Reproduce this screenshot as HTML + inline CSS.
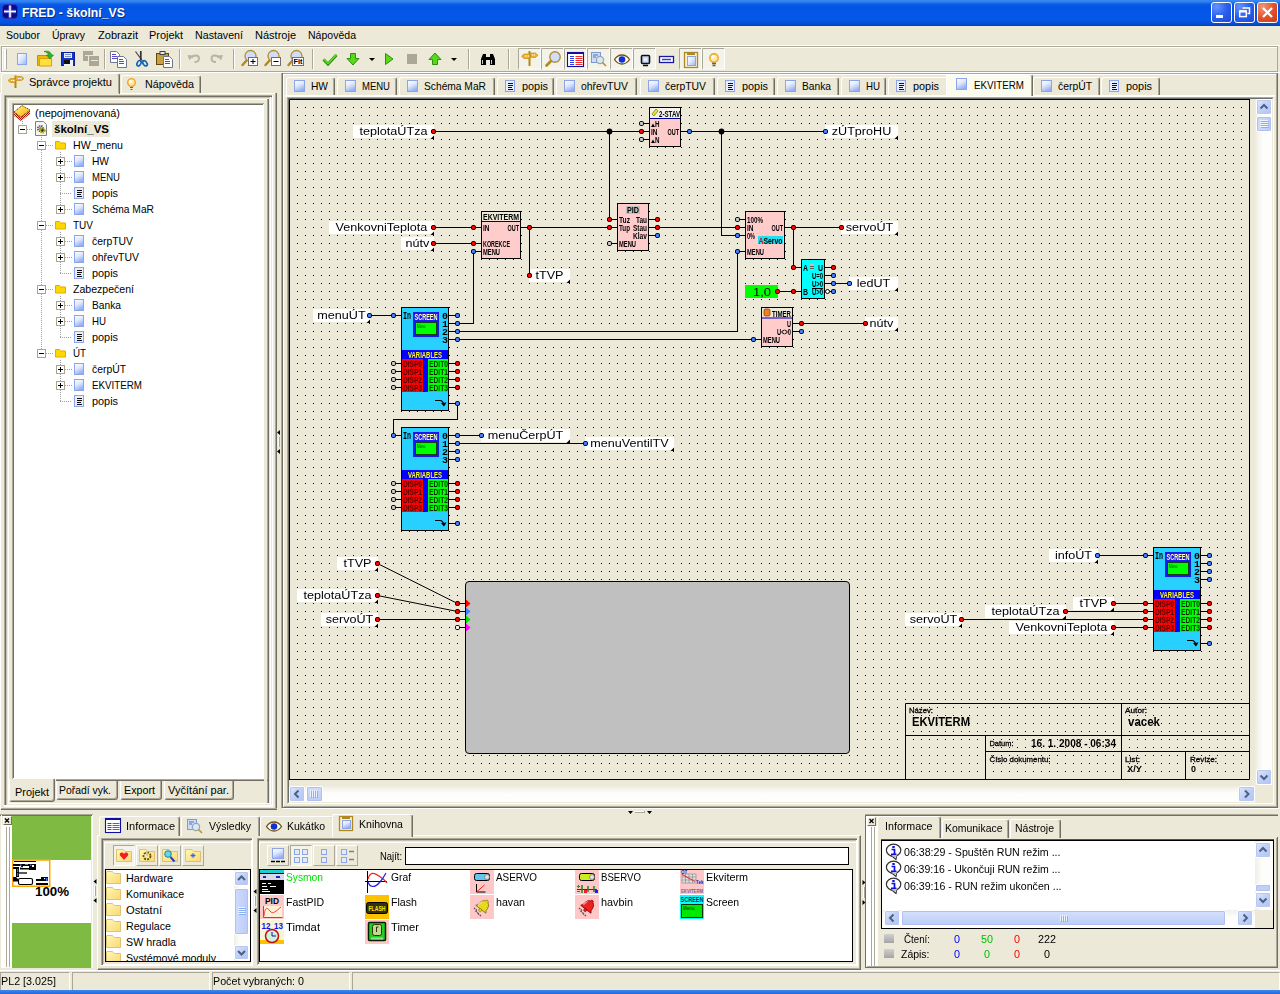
<!DOCTYPE html><html><head><meta charset="utf-8"><title>FRED</title><style>
*{box-sizing:border-box;margin:0;padding:0}
html,body{width:1280px;height:994px;overflow:hidden;background:#ECE9D8}
body{position:relative;font-family:"Liberation Sans",sans-serif;font-size:11px;color:#000}
.a{position:absolute}
.t{position:absolute;white-space:nowrap;line-height:13px}
.b{font-weight:bold}
svg{position:absolute;left:0;top:0;overflow:visible}
</style></head><body>
<div class="a" style="left:0px;top:0px;width:1280px;height:26px;background:linear-gradient(#3A8BF4 0%,#2F7CEE 8%,#0B5CE6 16%,#0355E5 28%,#0458E8 75%,#0350D8 90%,#0140B8 100%)"></div>
<svg width="1280" height="30"><rect x="2.5" y="4.5" width="15" height="14" rx="3.5" fill="#0A0A8C" stroke="#3030B0"/><path d="M10 5.500v12M4 11.500h12" stroke="#7070E0" stroke-width="3.400" opacity=".7"/><path d="M10 5.500v12M4 11.500h12" stroke="#fff" stroke-width="1.500"/></svg>
<div class="t" style="left:22px;top:5px;font-size:13px;font-weight:bold;transform:scaleX(0.944);transform-origin:0 0;color:#fff;line-height:16px;text-shadow:1px 1px 0 #0A2A80">FRED - školní_VS</div>
<div class="a" style="left:1211px;top:2px;width:21px;height:21px;background:radial-gradient(circle at 25% 20%,#6494FF,#2A5EEC 50%,#1E4AD4);border:1px solid #fff;border-radius:3px"></div>
<div class="a" style="left:1234px;top:2px;width:21px;height:21px;background:radial-gradient(circle at 25% 20%,#6494FF,#2A5EEC 50%,#1E4AD4);border:1px solid #fff;border-radius:3px"></div>
<div class="a" style="left:1257px;top:2px;width:21px;height:21px;background:radial-gradient(circle at 25% 20%,#F09878,#E25028 55%,#C83C14);border:1px solid #fff;border-radius:3px"></div>
<svg width="1280" height="30"><rect x="1216" y="15" width="7" height="3" fill="#fff"/><path d="M1242.5 8h7v5.500h-2" fill="none" stroke="#fff" stroke-width="1.5"/><rect x="1239.7" y="11" width="6.6" height="5.600" fill="none" stroke="#fff" stroke-width="1.5"/><path d="M1239.700 11.500h6.600" stroke="#fff" stroke-width="2"/><path d="M1263 8l9 9M1272 8l-9 9" stroke="#fff" stroke-width="2.2"/></svg>
<div class="t" style="left:6px;top:29px;font-size:11px;transform:scaleX(0.958);transform-origin:0 0;">Soubor</div>
<div class="t" style="left:52px;top:29px;font-size:11px;transform:scaleX(0.947);transform-origin:0 0;">Úpravy</div>
<div class="t" style="left:98px;top:29px;font-size:11px;transform:scaleX(1.007);transform-origin:0 0;">Zobrazit</div>
<div class="t" style="left:149px;top:29px;font-size:11px;transform:scaleX(0.993);transform-origin:0 0;">Projekt</div>
<div class="t" style="left:195px;top:29px;font-size:11px;transform:scaleX(0.969);transform-origin:0 0;">Nastavení</div>
<div class="t" style="left:255px;top:29px;font-size:11px;transform:scaleX(1.001);transform-origin:0 0;">Nástroje</div>
<div class="t" style="left:308px;top:29px;font-size:11px;transform:scaleX(0.957);transform-origin:0 0;">Nápověda</div>
<div class="a" style="left:0px;top:45px;width:1280px;height:1px;background:#fff"></div>
<div class="a" style="left:1px;top:46px;width:1277px;height:26px;border:1px solid #ACA899;border-right-color:#ACA899"></div>
<div class="a" style="left:2px;top:47px;width:1275px;height:1px;background:#fff"></div>
<div class="a" style="left:2px;top:47px;width:1px;height:24px;background:#fff"></div>
<div class="a" style="left:0px;top:72px;width:1280px;height:1px;background:#fff"></div>
<div class="a" style="left:4px;top:49px;width:1px;height:20px;background:#fff"></div>
<div class="a" style="left:5px;top:49px;width:1px;height:20px;background:#fff"></div>
<div class="a" style="left:6px;top:49px;width:1px;height:20px;background:#ACA899"></div>
<svg width="1280" height="80"><linearGradient id="pg17_53" x1="0" y1="0" x2="1" y2="1"><stop offset="0" stop-color="#fff"/><stop offset="0.5" stop-color="#DCE6FC"/><stop offset="1" stop-color="#9AB4F0"/></linearGradient><rect x="17.5" y="53.5" width="9" height="11" fill="url(#pg17_53)" stroke="#8CA4EC"/><path d="M37.5 55.5h10l2 2v8h-12z" fill="#F0B800" stroke="#C89000"/><path d="M39.5 58.500h12v7.5h-12z" fill="#FFE040" stroke="#D8A000"/><path d="M44 51.500c4-1 7 0 7.500 3.500h2l-3.500 4-3.500-4h2c-.5-2-2-3-4.500-3.500z" fill="#30B030" stroke="#108010" stroke-width=".6"/><rect x="61.500" y="52.500" width="13" height="13" fill="#1038D0" stroke="#0820A0"/><rect x="64" y="53" width="8" height="5" fill="#E8ECF8"/><path d="M65 54.500h6M65 56.500h6" stroke="#8090C0"/><rect x="64" y="60" width="9" height="6" fill="#F0F0F0"/><rect x="64" y="60" width="6" height="4" fill="#101010"/><rect x="83" y="51" width="10" height="10" fill="#ACA899"/><rect x="88.500" y="55.500" width="11" height="11" fill="#ACA899" stroke="#ECE9D8" stroke-width="1"/><path d="M85 55.500h4M91 60.500h7" stroke="#ECE9D8"/><path d="M104.5 49v20" stroke="#ACA899"/><path d="M105.5 49v20" stroke="#fff"/><path d="M110.5 51.5h6l3 3v8h-9z" fill="#fff" stroke="#707890"/><path d="M112 54.5h4M112 56.5h5M112 58.5h5" stroke="#5848C8"/><path d="M117.5 56.5h6l3 3v8h-9z" fill="#fff" stroke="#707890"/><path d="M119 59.5h4M119 61.5h5M119 63.5h5" stroke="#5848C8"/><path d="M135.500 51.500l7 9.500" stroke="#404040" stroke-width="1.200"/><path d="M140.800 51v9" stroke="#303030" stroke-width="1.700"/><ellipse cx="139" cy="63.300" rx="1.800" ry="2.900" transform="rotate(28 139 63.300)" fill="none" stroke="#1060C0" stroke-width="1.600"/><ellipse cx="145" cy="63.300" rx="1.800" ry="2.900" transform="rotate(-38 145 63.300)" fill="none" stroke="#1060C0" stroke-width="1.600"/><rect x="156.500" y="53.500" width="12" height="11" fill="#C8A040" stroke="#604810"/><rect x="160" y="51.500" width="5" height="3" fill="#E8E8E8" stroke="#404040"/><path d="M163.5 56.5h6l3 3v8h-9z" fill="#fff" stroke="#707890"/><path d="M165 59.5h4M165 61.5h5M165 63.5h5" stroke="#5848C8"/><path d="M179.5 49v20" stroke="#ACA899"/><path d="M180.5 49v20" stroke="#fff"/><path d="M191.500 58C193 54.500 199 54.500 199 58.500C199 61 197 62 194.500 62" fill="none" stroke="#B8B4A4" stroke-width="1.900"/><path d="M187.500 55l5.500 .5-3.500 5z" fill="#B8B4A4"/><path d="M219 58C217.500 54.500 211.500 54.500 211.500 58.500C211.500 61 213.500 62 216 62" fill="none" stroke="#B8B4A4" stroke-width="1.900"/><path d="M223 55l-5.500 .5 3.500 5z" fill="#B8B4A4"/><path d="M233.5 49v20" stroke="#ACA899"/><path d="M234.5 49v20" stroke="#fff"/><path d="M242.5 65l4.500-5" stroke="#B08820" stroke-width="2.400" stroke-linecap="round"/><circle cx="250.5" cy="56" r="5.500" fill="#D0DCFA" stroke="#B09030" stroke-width="1.300"/><rect x="248.5" y="57.5" width="9" height="8" fill="#fff" stroke="#707070"/><path d="M250.5 61.500h5M253 59v5" stroke="#000"/><path d="M265.5 65l4.500-5" stroke="#B08820" stroke-width="2.400" stroke-linecap="round"/><circle cx="273.5" cy="56" r="5.500" fill="#D0DCFA" stroke="#B09030" stroke-width="1.300"/><rect x="271.5" y="57.5" width="9" height="8" fill="#fff" stroke="#707070"/><path d="M273.5 61.500h5" stroke="#000"/><path d="M288.500 65l4.500-5" stroke="#B08820" stroke-width="2.400" stroke-linecap="round"/><circle cx="296.500" cy="56" r="5.500" fill="#D0DCFA" stroke="#B09030" stroke-width="1.300"/><rect x="292.500" y="57.500" width="11" height="8" fill="#fff" stroke="#707070"/><text x="293.500" y="64.300" font-size="7" font-weight="bold" font-family="Liberation Sans" textLength="9" lengthAdjust="spacingAndGlyphs">Fit</text><path d="M312.5 49v20" stroke="#ACA899"/><path d="M313.5 49v20" stroke="#fff"/><path d="M323.500 59.500l4.500 4.500 8.500-9" fill="none" stroke="#2C9010" stroke-width="3"/><path d="M323.500 59l4.500 4.500 8.500-9" fill="none" stroke="#60E020" stroke-width="1.400"/><path d="M350.500 53.500h5v5h3.500l-6 6.500-6-6.500h3.500z" fill="#58D818" stroke="#2C9010"/><path d="M369 58h6l-3 3z" fill="#000"/><path d="M385.500 53.500l7.500 5.500-7.500 5.500z" fill="#58D818" stroke="#2C9010"/><rect x="407" y="54" width="10" height="10" fill="#ACA899"/><path d="M432.500 64.500h5v-5h3.500l-6-6.500-6 6.500h3.500z" fill="#58D818" stroke="#2C9010"/><path d="M451 58h6l-3 3z" fill="#000"/><path d="M468.5 49v20" stroke="#ACA899"/><path d="M469.5 49v20" stroke="#fff"/><path d="M481 65v-6l2-5h3v3h4v-3h3l2 5v6h-5v-5h-4v5z" fill="#000"/><path d="M482.500 60v4M491.500 60v4" stroke="#fff" stroke-width=".8"/><path d="M508.5 49v20" stroke="#ACA899"/><path d="M509.5 49v20" stroke="#fff"/><rect x="518" y="48" width="23" height="21" fill="#F4F3EA"/><path d="M518.5 69.500v-21h22" fill="none" stroke="#ACA899"/><path d="M540.5 48.500v20.500h-22" fill="none" stroke="#fff"/><rect x="541" y="48" width="23" height="21" fill="#F4F3EA"/><path d="M541.5 69.500v-21h22" fill="none" stroke="#ACA899"/><path d="M563.5 48.500v20.500h-22" fill="none" stroke="#fff"/><rect x="564" y="48" width="23" height="21" fill="#F4F3EA"/><path d="M564.5 69.500v-21h22" fill="none" stroke="#ACA899"/><path d="M586.5 48.500v20.500h-22" fill="none" stroke="#fff"/><rect x="587" y="48" width="23" height="21" fill="#F4F3EA"/><path d="M587.5 69.500v-21h22" fill="none" stroke="#ACA899"/><path d="M609.5 48.500v20.500h-22" fill="none" stroke="#fff"/><rect x="610" y="48" width="23" height="21" fill="#F4F3EA"/><path d="M610.5 69.500v-21h22" fill="none" stroke="#ACA899"/><path d="M632.5 48.500v20.500h-22" fill="none" stroke="#fff"/><rect x="633" y="48" width="23" height="21" fill="#F4F3EA"/><path d="M633.5 69.500v-21h22" fill="none" stroke="#ACA899"/><path d="M655.5 48.500v20.500h-22" fill="none" stroke="#fff"/><rect x="679" y="48" width="23" height="21" fill="#F4F3EA"/><path d="M679.5 69.500v-21h22" fill="none" stroke="#ACA899"/><path d="M701.5 48.500v20.500h-22" fill="none" stroke="#fff"/><rect x="702" y="48" width="23" height="21" fill="#F4F3EA"/><path d="M702.5 69.500v-21h22" fill="none" stroke="#ACA899"/><path d="M724.5 48.500v20.500h-22" fill="none" stroke="#fff"/><path d="M529.500 51v15" stroke="#B8860B" stroke-width="2"/><path d="M524 54h6v4.500h-6l-2.500-2.200z" fill="#F0B020" stroke="#B8860B" stroke-width=".6"/><path d="M530.500 53h5l2.500 2.200-2.500 2.200h-5z" fill="#F0B020" stroke="#B8860B" stroke-width=".6"/><path d="M525 56h1.500M527.500 56h1.500M532 55h1.500M534 55h1" stroke="#fff"/><path d="M546.500 65.500l5-5" stroke="#B08820" stroke-width="2.600" stroke-linecap="round"/><circle cx="555" cy="57" r="5.200" fill="#D0DEFC" stroke="#B09030" stroke-width="1.400"/><rect x="567.500" y="52.500" width="16" height="14" fill="#fff" stroke="#1010A0" stroke-width="1.100"/><rect x="567.500" y="52" width="16" height="2" fill="#1010A0"/><path d="M570 56.500h4M570 58.500h4M570 60.500h4M570 62.500h4M570 64.500h4" stroke="#3040E0"/><path d="M575.500 56.500h7M575.500 58.500h7M575.500 60.500h7M575.500 62.500h7M575.500 64.500h7" stroke="#F03030"/><rect x="591.500" y="52.500" width="9" height="10" fill="#D0DCF4" stroke="#8098D0"/><path d="M593 55h5M593 57h3" stroke="#5070C0"/><circle cx="600" cy="60" r="3.600" fill="#D8E8F8" stroke="#90A8B0" stroke-width="1.200"/><path d="M602.500 62.500l3.500 3.500" stroke="#C09020" stroke-width="1.600"/><path d="M614.500 59.500c4-6 11-6 15 0c-4 6-11 6-15 0z" fill="#fff" stroke="#705010" stroke-width="1.300"/><circle cx="622" cy="59.500" r="3.300" fill="#1030D0"/><rect x="641.500" y="55.500" width="8" height="8" rx="1" fill="#C8D8F8" stroke="#101010" stroke-width="1.600"/><path d="M643 65.500h5" stroke="#101010" stroke-width="1.500"/><rect x="644" y="58" width="3" height="3" fill="#E8F0FF"/><rect x="659.500" y="56.500" width="14" height="6" fill="#fff" stroke="#1818A0" stroke-width="1.300"/><path d="M662 59.500h9" stroke="#3040D0" stroke-width="1.500"/><rect x="684.500" y="52.500" width="13" height="15" fill="#F8F0D8" stroke="#B08820" stroke-width="1.300"/><rect x="687" y="53" width="8" height="2" fill="#B08820"/><linearGradient id="pg687_56" x1="0" y1="0" x2="1" y2="1"><stop offset="0" stop-color="#fff"/><stop offset="0.5" stop-color="#DCE6FC"/><stop offset="1" stop-color="#9AB4F0"/></linearGradient><rect x="687.5" y="56.5" width="8" height="9" fill="url(#pg687_56)" stroke="#8CA4EC"/><circle cx="714" cy="58" r="4.200" fill="#FFE8A0" stroke="#F0A020" stroke-width="1.400"/><circle cx="713" cy="57" r="1.800" fill="#fff"/><path d="M712 63.500h4M712.500 65.500h3" stroke="#806020" stroke-width="1.300"/></svg>
<div class="a" style="left:0px;top:93px;width:277px;height:1px;background:#fff"></div>
<div class="a" style="left:0px;top:93px;width:1px;height:716px;background:#fff"></div>
<div class="a" style="left:121px;top:75px;width:80px;height:18px;background:#ECE9D8;border-left:1px solid #fff;border-top:1px solid #fff;border-right:1px solid #716F64;border-radius:3px 3px 0 0;box-shadow:inset -1px 0 0 #ACA899"></div>
<div class="a" style="left:1px;top:73px;width:119px;height:21px;background:#ECE9D8;border-left:1px solid #fff;border-top:1px solid #fff;border-right:1px solid #716F64;border-radius:3px 3px 0 0;box-shadow:inset -1px 0 0 #ACA899"></div>
<div class="a" style="left:2px;top:93px;width:117px;height:2px;background:#ECE9D8"></div>
<div class="t" style="left:29px;top:76px;font-size:11px;transform:scaleX(1.005);transform-origin:0 0;">Správce projektu</div>
<div class="t" style="left:145px;top:78px;font-size:11px;transform:scaleX(0.977);transform-origin:0 0;">Nápověda</div>
<div class="a" style="left:275px;top:93px;width:1px;height:717px;background:#ACA899"></div>
<div class="a" style="left:276px;top:93px;width:1px;height:717px;background:#716F64"></div>
<div class="a" style="left:1px;top:808px;width:276px;height:1px;background:#ACA899"></div>
<div class="a" style="left:1px;top:809px;width:276px;height:1px;background:#716F64"></div>
<div class="a" style="left:4px;top:95px;width:1px;height:711px;background:#ACA899"></div>
<div class="a" style="left:4px;top:95px;width:268px;height:1px;background:#ACA899"></div>
<div class="a" style="left:5px;top:96px;width:1px;height:710px;background:#716F64"></div>
<div class="a" style="left:5px;top:96px;width:267px;height:1px;background:#716F64"></div>
<div class="a" style="left:6px;top:97px;width:1px;height:709px;background:#C4C0AE"></div>
<div class="a" style="left:6px;top:97px;width:266px;height:1px;background:#C4C0AE"></div>
<div class="a" style="left:270px;top:97px;width:1px;height:708px;background:#fff"></div>
<div class="a" style="left:272px;top:95px;width:1px;height:712px;background:#fff"></div>
<div class="a" style="left:8px;top:803px;width:263px;height:1px;background:#fff"></div>
<div class="a" style="left:4px;top:805px;width:269px;height:1px;background:#fff"></div>
<div class="a" style="left:4px;top:806px;width:269px;height:1px;background:#fff"></div>
<div class="a" style="left:8px;top:99px;width:1px;height:704px;background:#fff"></div>
<div class="a" style="left:8px;top:99px;width:260px;height:1px;background:#fff"></div>
<div class="a" style="left:267px;top:99px;width:1px;height:704px;background:#ACA899"></div>
<div class="a" style="left:268px;top:99px;width:1px;height:704px;background:#716F64"></div>
<div class="a" style="left:12px;top:103px;width:253px;height:677px;background:#fff;border-left:1px solid #ACA899;border-top:1px solid #ACA899"></div>
<div class="a" style="left:13px;top:104px;width:250px;height:674px;background:#fff;border-left:1px solid #716F64;border-top:1px solid #716F64"></div>
<div class="a" style="left:56px;top:779px;width:212px;height:1px;background:#ACA899"></div>
<div class="a" style="left:56px;top:780px;width:212px;height:1px;background:#716F64"></div>
<div class="a" style="left:264px;top:103px;width:3px;height:700px;background:#ECE9D8"></div>
<div class="t" style="left:35px;top:107px;font-size:11px;transform:scaleX(0.993);transform-origin:0 0;">(nepojmenovaná)</div>
<div class="a" style="left:52px;top:121px;width:58px;height:16px;background:#ECE9D8"></div>
<div class="t" style="left:54px;top:123px;font-size:11px;font-weight:bold;transform:scaleX(1.046);transform-origin:0 0;">školní_VS</div>
<div class="t" style="left:73px;top:139px;font-size:11px;transform:scaleX(0.962);transform-origin:0 0;">HW_menu</div>
<div class="t" style="left:92px;top:155px;font-size:11px;transform:scaleX(0.928);transform-origin:0 0;">HW</div>
<div class="t" style="left:92px;top:171px;font-size:11px;transform:scaleX(0.864);transform-origin:0 0;">MENU</div>
<div class="t" style="left:92px;top:187px;font-size:11px;transform:scaleX(0.989);transform-origin:0 0;">popis</div>
<div class="t" style="left:92px;top:203px;font-size:11px;transform:scaleX(0.930);transform-origin:0 0;">Schéma MaR</div>
<div class="t" style="left:73px;top:219px;font-size:11px;transform:scaleX(0.909);transform-origin:0 0;">TUV</div>
<div class="t" style="left:92px;top:235px;font-size:11px;transform:scaleX(0.945);transform-origin:0 0;">čerpTUV</div>
<div class="t" style="left:92px;top:251px;font-size:11px;transform:scaleX(0.949);transform-origin:0 0;">ohřevTUV</div>
<div class="t" style="left:92px;top:267px;font-size:11px;transform:scaleX(0.989);transform-origin:0 0;">popis</div>
<div class="t" style="left:73px;top:283px;font-size:11px;transform:scaleX(0.959);transform-origin:0 0;">Zabezpečení</div>
<div class="t" style="left:92px;top:299px;font-size:11px;transform:scaleX(0.930);transform-origin:0 0;">Banka</div>
<div class="t" style="left:92px;top:315px;font-size:11px;transform:scaleX(0.881);transform-origin:0 0;">HU</div>
<div class="t" style="left:92px;top:331px;font-size:11px;transform:scaleX(0.989);transform-origin:0 0;">popis</div>
<div class="t" style="left:73px;top:347px;font-size:11px;transform:scaleX(0.887);transform-origin:0 0;">ÚT</div>
<div class="t" style="left:92px;top:363px;font-size:11px;transform:scaleX(0.943);transform-origin:0 0;">čerpÚT</div>
<div class="t" style="left:92px;top:379px;font-size:11px;transform:scaleX(0.889);transform-origin:0 0;">EKVITERM</div>
<div class="t" style="left:92px;top:395px;font-size:11px;transform:scaleX(0.989);transform-origin:0 0;">popis</div>
<svg width="290" height="820"><path d="M15.500 75.500v12.500" stroke="#B8860B" stroke-width="2"/><path d="M10.500 78.500h5v4h-5l-2.500-2z" fill="#F0B020" stroke="#B8860B" stroke-width=".6"/><path d="M15.500 76.500h6l2.500 2-2.500 2h-6z" fill="#F0B020" stroke="#B8860B" stroke-width=".6"/><path d="M11 80.500h1.500M13 80.500h1.500M18 78.500h1.500M20 78.500h1.500" stroke="#fff"/><circle cx="131.500" cy="82.500" r="3.800" fill="#FFE8A0" stroke="#F0A020" stroke-width="1.300"/><circle cx="130.500" cy="81.500" r="1.500" fill="#fff"/><path d="M130 87.500h3M130.500 89.500h2" stroke="#806020" stroke-width="1.200"/><path d="M22.500 121v4" stroke="#A0A0A0" stroke-dasharray="1 1"/><path d="M41.500 137v4M41.500 150v71M41.500 230v55M41.500 294v55" stroke="#A0A0A0" stroke-dasharray="1 1"/><path d="M60.500 152v58" stroke="#A0A0A0" stroke-dasharray="1 1"/><path d="M60.500 232v42" stroke="#A0A0A0" stroke-dasharray="1 1"/><path d="M60.500 296v42" stroke="#A0A0A0" stroke-dasharray="1 1"/><path d="M60.500 360v42" stroke="#A0A0A0" stroke-dasharray="1 1"/><defs><pattern id="chk" width="2" height="2" patternUnits="userSpaceOnUse"><rect width="2" height="2" fill="#FFD000"/><rect width="1" height="1" fill="#B01000"/><rect x="1" y="1" width="1" height="1" fill="#B01000"/></pattern><linearGradient id="bk" x1="0" y1="0" x2="1" y2="1"><stop offset="0" stop-color="#FFF080"/><stop offset="1" stop-color="#FFB000"/></linearGradient></defs><path d="M14 112v4l7 5 9-7v-4l-9 7z" fill="url(#chk)"/><path d="M14 112l8-6.500 8 4.500-9 7z" fill="url(#bk)" stroke="#301000" stroke-width=".8" stroke-dasharray="1.200 .8"/><path d="M27 129.5H33" stroke="#A0A0A0" stroke-dasharray="1 1"/><rect x="18.5" y="125.5" width="8" height="8" fill="#fff" stroke="#A8A490"/><path d="M20 129.5h5" stroke="#000"/><path d="M35.500 121.500h8l3 3v11h-11z" fill="#F4F4F4" stroke="#808080"/><circle cx="40.500" cy="128.500" r="2.600" fill="none" stroke="#606060" stroke-width="2" stroke-dasharray="1.300 .8"/><circle cx="40.500" cy="128.500" r="1.600" fill="#909090"/><circle cx="42.500" cy="130.500" r="2.200" fill="none" stroke="#A8A000" stroke-width="1.800" stroke-dasharray="1.200 .7"/><circle cx="42.500" cy="130.500" r="1.200" fill="#303000"/><path d="M46 145.5H53" stroke="#A0A0A0" stroke-dasharray="1 1"/><rect x="37.5" y="141.5" width="8" height="8" fill="#fff" stroke="#A8A490"/><path d="M39 145.5h5" stroke="#000"/><path d="M55.5 141.5h4l1 1.500h5v6h-10z" fill="#FFD800" stroke="#E8A800"/><path d="M65 161.5H72" stroke="#A0A0A0" stroke-dasharray="1 1"/><rect x="56.5" y="157.5" width="8" height="8" fill="#fff" stroke="#A8A490"/><path d="M58 161.5h5" stroke="#000"/><path d="M60.5 159v5" stroke="#000"/><linearGradient id="tp1" x1="0" y1="0" x2="0.450" y2="1"><stop offset="0" stop-color="#fff"/><stop offset="0.5" stop-color="#E0E8FC"/><stop offset="1" stop-color="#94B0F4"/></linearGradient><rect x="74.5" y="155.5" width="9" height="11" fill="url(#tp1)" stroke="#8CA4EC"/><path d="M65 177.5H72" stroke="#A0A0A0" stroke-dasharray="1 1"/><rect x="56.5" y="173.5" width="8" height="8" fill="#fff" stroke="#A8A490"/><path d="M58 177.5h5" stroke="#000"/><path d="M60.5 175v5" stroke="#000"/><linearGradient id="tp2" x1="0" y1="0" x2="0.450" y2="1"><stop offset="0" stop-color="#fff"/><stop offset="0.5" stop-color="#E0E8FC"/><stop offset="1" stop-color="#94B0F4"/></linearGradient><rect x="74.5" y="171.5" width="9" height="11" fill="url(#tp2)" stroke="#8CA4EC"/><path d="M60 193.5H72" stroke="#A0A0A0" stroke-dasharray="1 1"/><rect x="74.5" y="187.5" width="9" height="11" fill="#E8EEFC" stroke="#8CA4EC"/><path d="M77 190.5h5M77 192.5h5M77 194.5h4M77 196.5h5" stroke="#101010" stroke-width="1.200"/><path d="M65 209.5H72" stroke="#A0A0A0" stroke-dasharray="1 1"/><rect x="56.5" y="205.5" width="8" height="8" fill="#fff" stroke="#A8A490"/><path d="M58 209.5h5" stroke="#000"/><path d="M60.5 207v5" stroke="#000"/><linearGradient id="tp3" x1="0" y1="0" x2="0.450" y2="1"><stop offset="0" stop-color="#fff"/><stop offset="0.5" stop-color="#E0E8FC"/><stop offset="1" stop-color="#94B0F4"/></linearGradient><rect x="74.5" y="203.5" width="9" height="11" fill="url(#tp3)" stroke="#8CA4EC"/><path d="M46 225.5H53" stroke="#A0A0A0" stroke-dasharray="1 1"/><rect x="37.5" y="221.5" width="8" height="8" fill="#fff" stroke="#A8A490"/><path d="M39 225.5h5" stroke="#000"/><path d="M55.5 221.5h4l1 1.500h5v6h-10z" fill="#FFD800" stroke="#E8A800"/><path d="M65 241.5H72" stroke="#A0A0A0" stroke-dasharray="1 1"/><rect x="56.5" y="237.5" width="8" height="8" fill="#fff" stroke="#A8A490"/><path d="M58 241.5h5" stroke="#000"/><path d="M60.5 239v5" stroke="#000"/><linearGradient id="tp4" x1="0" y1="0" x2="0.450" y2="1"><stop offset="0" stop-color="#fff"/><stop offset="0.5" stop-color="#E0E8FC"/><stop offset="1" stop-color="#94B0F4"/></linearGradient><rect x="74.5" y="235.5" width="9" height="11" fill="url(#tp4)" stroke="#8CA4EC"/><path d="M65 257.5H72" stroke="#A0A0A0" stroke-dasharray="1 1"/><rect x="56.5" y="253.5" width="8" height="8" fill="#fff" stroke="#A8A490"/><path d="M58 257.5h5" stroke="#000"/><path d="M60.5 255v5" stroke="#000"/><linearGradient id="tp5" x1="0" y1="0" x2="0.450" y2="1"><stop offset="0" stop-color="#fff"/><stop offset="0.5" stop-color="#E0E8FC"/><stop offset="1" stop-color="#94B0F4"/></linearGradient><rect x="74.5" y="251.5" width="9" height="11" fill="url(#tp5)" stroke="#8CA4EC"/><path d="M60 273.5H72" stroke="#A0A0A0" stroke-dasharray="1 1"/><rect x="74.5" y="267.5" width="9" height="11" fill="#E8EEFC" stroke="#8CA4EC"/><path d="M77 270.5h5M77 272.5h5M77 274.5h4M77 276.5h5" stroke="#101010" stroke-width="1.200"/><path d="M46 289.5H53" stroke="#A0A0A0" stroke-dasharray="1 1"/><rect x="37.5" y="285.5" width="8" height="8" fill="#fff" stroke="#A8A490"/><path d="M39 289.5h5" stroke="#000"/><path d="M55.5 285.5h4l1 1.500h5v6h-10z" fill="#FFD800" stroke="#E8A800"/><path d="M65 305.5H72" stroke="#A0A0A0" stroke-dasharray="1 1"/><rect x="56.5" y="301.5" width="8" height="8" fill="#fff" stroke="#A8A490"/><path d="M58 305.5h5" stroke="#000"/><path d="M60.5 303v5" stroke="#000"/><linearGradient id="tp6" x1="0" y1="0" x2="0.450" y2="1"><stop offset="0" stop-color="#fff"/><stop offset="0.5" stop-color="#E0E8FC"/><stop offset="1" stop-color="#94B0F4"/></linearGradient><rect x="74.5" y="299.5" width="9" height="11" fill="url(#tp6)" stroke="#8CA4EC"/><path d="M65 321.5H72" stroke="#A0A0A0" stroke-dasharray="1 1"/><rect x="56.5" y="317.5" width="8" height="8" fill="#fff" stroke="#A8A490"/><path d="M58 321.5h5" stroke="#000"/><path d="M60.5 319v5" stroke="#000"/><linearGradient id="tp7" x1="0" y1="0" x2="0.450" y2="1"><stop offset="0" stop-color="#fff"/><stop offset="0.5" stop-color="#E0E8FC"/><stop offset="1" stop-color="#94B0F4"/></linearGradient><rect x="74.5" y="315.5" width="9" height="11" fill="url(#tp7)" stroke="#8CA4EC"/><path d="M60 337.5H72" stroke="#A0A0A0" stroke-dasharray="1 1"/><rect x="74.5" y="331.5" width="9" height="11" fill="#E8EEFC" stroke="#8CA4EC"/><path d="M77 334.5h5M77 336.5h5M77 338.5h4M77 340.5h5" stroke="#101010" stroke-width="1.200"/><path d="M46 353.5H53" stroke="#A0A0A0" stroke-dasharray="1 1"/><rect x="37.5" y="349.5" width="8" height="8" fill="#fff" stroke="#A8A490"/><path d="M39 353.5h5" stroke="#000"/><path d="M55.5 349.5h4l1 1.500h5v6h-10z" fill="#FFD800" stroke="#E8A800"/><path d="M65 369.5H72" stroke="#A0A0A0" stroke-dasharray="1 1"/><rect x="56.5" y="365.5" width="8" height="8" fill="#fff" stroke="#A8A490"/><path d="M58 369.5h5" stroke="#000"/><path d="M60.5 367v5" stroke="#000"/><linearGradient id="tp8" x1="0" y1="0" x2="0.450" y2="1"><stop offset="0" stop-color="#fff"/><stop offset="0.5" stop-color="#E0E8FC"/><stop offset="1" stop-color="#94B0F4"/></linearGradient><rect x="74.5" y="363.5" width="9" height="11" fill="url(#tp8)" stroke="#8CA4EC"/><path d="M65 385.5H72" stroke="#A0A0A0" stroke-dasharray="1 1"/><rect x="56.5" y="381.5" width="8" height="8" fill="#fff" stroke="#A8A490"/><path d="M58 385.5h5" stroke="#000"/><path d="M60.5 383v5" stroke="#000"/><linearGradient id="tp9" x1="0" y1="0" x2="0.450" y2="1"><stop offset="0" stop-color="#fff"/><stop offset="0.5" stop-color="#E0E8FC"/><stop offset="1" stop-color="#94B0F4"/></linearGradient><rect x="74.5" y="379.5" width="9" height="11" fill="url(#tp9)" stroke="#8CA4EC"/><path d="M60 401.5H72" stroke="#A0A0A0" stroke-dasharray="1 1"/><rect x="74.5" y="395.5" width="9" height="11" fill="#E8EEFC" stroke="#8CA4EC"/><path d="M77 398.5h5M77 400.5h5M77 402.5h4M77 404.5h5" stroke="#101010" stroke-width="1.200"/></svg>
<div class="a" style="left:56px;top:781px;width:62px;height:19px;background:#ECE9D8;border-left:1px solid #fff;border-bottom:1px solid #716F64;border-right:1px solid #716F64;border-radius:0 0 3px 3px;box-shadow:inset -1px -1px 0 #ACA899"></div>
<div class="a" style="left:120px;top:781px;width:42px;height:19px;background:#ECE9D8;border-left:1px solid #fff;border-bottom:1px solid #716F64;border-right:1px solid #716F64;border-radius:0 0 3px 3px;box-shadow:inset -1px -1px 0 #ACA899"></div>
<div class="a" style="left:164px;top:781px;width:70px;height:19px;background:#ECE9D8;border-left:1px solid #fff;border-bottom:1px solid #716F64;border-right:1px solid #716F64;border-radius:0 0 3px 3px;box-shadow:inset -1px -1px 0 #ACA899"></div>
<div class="a" style="left:9px;top:779px;width:46px;height:23px;background:#ECE9D8;border-left:1px solid #fff;border-bottom:1px solid #716F64;border-right:1px solid #716F64;border-radius:0 0 3px 3px;box-shadow:inset -1px -1px 0 #ACA899"></div>
<div class="t" style="left:15px;top:786px;font-size:11px;transform:scaleX(0.993);transform-origin:0 0;">Projekt</div>
<div class="t" style="left:59px;top:784px;font-size:11px;transform:scaleX(0.945);transform-origin:0 0;">Pořadí vyk.</div>
<div class="t" style="left:124px;top:784px;font-size:11px;transform:scaleX(0.975);transform-origin:0 0;">Export</div>
<div class="t" style="left:168px;top:784px;font-size:11px;transform:scaleX(1.004);transform-origin:0 0;">Vyčítání par.</div>
<svg width="290" height="820"><path d="M280 430v5l-3-2.500zM280 449v5l-3-2.500z" fill="#000"/><path d="M278.500 437v10" stroke="#fff"/><path d="M279.500 437v10" stroke="#ACA899"/></svg>
<div class="a" style="left:281px;top:73px;width:1px;height:735px;background:#ACA899"></div>
<div class="a" style="left:282px;top:73px;width:1px;height:735px;background:#716F64"></div>
<div class="a" style="left:283px;top:74px;width:1px;height:733px;background:#fff"></div>
<div class="a" style="left:283px;top:73px;width:995px;height:1px;background:#ACA899"></div>
<div class="a" style="left:284px;top:74px;width:993px;height:1px;background:#fff"></div>
<div class="a" style="left:1277px;top:73px;width:1px;height:735px;background:#716F64"></div>
<div class="a" style="left:1276px;top:74px;width:1px;height:733px;background:#ACA899"></div>
<div class="a" style="left:283px;top:807px;width:995px;height:1px;background:#716F64"></div>
<div class="a" style="left:284px;top:806px;width:993px;height:1px;background:#ACA899"></div>
<div class="a" style="left:283px;top:808px;width:996px;height:1px;background:#fff"></div>
<div class="a" style="left:285px;top:95px;width:990px;height:1px;background:#fff"></div>
<div class="a" style="left:286px;top:77px;width:49px;height:18px;background:#ECE9D8;border-left:1px solid #fff;border-top:1px solid #fff;border-right:1px solid #716F64;border-radius:3px 3px 0 0;box-shadow:inset -1px 0 0 #ACA899"></div>
<div class="t" style="left:311px;top:80px;font-size:11px;transform:scaleX(0.928);transform-origin:0 0;">HW</div>
<div class="a" style="left:337px;top:77px;width:60px;height:18px;background:#ECE9D8;border-left:1px solid #fff;border-top:1px solid #fff;border-right:1px solid #716F64;border-radius:3px 3px 0 0;box-shadow:inset -1px 0 0 #ACA899"></div>
<div class="t" style="left:362px;top:80px;font-size:11px;transform:scaleX(0.864);transform-origin:0 0;">MENU</div>
<div class="a" style="left:399px;top:77px;width:96px;height:18px;background:#ECE9D8;border-left:1px solid #fff;border-top:1px solid #fff;border-right:1px solid #716F64;border-radius:3px 3px 0 0;box-shadow:inset -1px 0 0 #ACA899"></div>
<div class="t" style="left:424px;top:80px;font-size:11px;transform:scaleX(0.930);transform-origin:0 0;">Schéma MaR</div>
<div class="a" style="left:497px;top:77px;width:57px;height:18px;background:#ECE9D8;border-left:1px solid #fff;border-top:1px solid #fff;border-right:1px solid #716F64;border-radius:3px 3px 0 0;box-shadow:inset -1px 0 0 #ACA899"></div>
<div class="t" style="left:522px;top:80px;font-size:11px;transform:scaleX(0.989);transform-origin:0 0;">popis</div>
<div class="a" style="left:556px;top:77px;width:81px;height:18px;background:#ECE9D8;border-left:1px solid #fff;border-top:1px solid #fff;border-right:1px solid #716F64;border-radius:3px 3px 0 0;box-shadow:inset -1px 0 0 #ACA899"></div>
<div class="t" style="left:581px;top:80px;font-size:11px;transform:scaleX(0.949);transform-origin:0 0;">ohřevTUV</div>
<div class="a" style="left:640px;top:77px;width:75px;height:18px;background:#ECE9D8;border-left:1px solid #fff;border-top:1px solid #fff;border-right:1px solid #716F64;border-radius:3px 3px 0 0;box-shadow:inset -1px 0 0 #ACA899"></div>
<div class="t" style="left:665px;top:80px;font-size:11px;transform:scaleX(0.945);transform-origin:0 0;">čerpTUV</div>
<div class="a" style="left:717px;top:77px;width:58px;height:18px;background:#ECE9D8;border-left:1px solid #fff;border-top:1px solid #fff;border-right:1px solid #716F64;border-radius:3px 3px 0 0;box-shadow:inset -1px 0 0 #ACA899"></div>
<div class="t" style="left:742px;top:80px;font-size:11px;transform:scaleX(0.989);transform-origin:0 0;">popis</div>
<div class="a" style="left:777px;top:77px;width:62px;height:18px;background:#ECE9D8;border-left:1px solid #fff;border-top:1px solid #fff;border-right:1px solid #716F64;border-radius:3px 3px 0 0;box-shadow:inset -1px 0 0 #ACA899"></div>
<div class="t" style="left:802px;top:80px;font-size:11px;transform:scaleX(0.930);transform-origin:0 0;">Banka</div>
<div class="a" style="left:841px;top:77px;width:45px;height:18px;background:#ECE9D8;border-left:1px solid #fff;border-top:1px solid #fff;border-right:1px solid #716F64;border-radius:3px 3px 0 0;box-shadow:inset -1px 0 0 #ACA899"></div>
<div class="t" style="left:866px;top:80px;font-size:11px;transform:scaleX(0.881);transform-origin:0 0;">HU</div>
<div class="a" style="left:888px;top:77px;width:61px;height:18px;background:#ECE9D8;border-left:1px solid #fff;border-top:1px solid #fff;border-right:1px solid #716F64;border-radius:3px 3px 0 0;box-shadow:inset -1px 0 0 #ACA899"></div>
<div class="t" style="left:913px;top:80px;font-size:11px;transform:scaleX(0.989);transform-origin:0 0;">popis</div>
<div class="a" style="left:1033px;top:77px;width:67px;height:18px;background:#ECE9D8;border-left:1px solid #fff;border-top:1px solid #fff;border-right:1px solid #716F64;border-radius:3px 3px 0 0;box-shadow:inset -1px 0 0 #ACA899"></div>
<div class="t" style="left:1058px;top:80px;font-size:11px;transform:scaleX(0.943);transform-origin:0 0;">čerpÚT</div>
<div class="a" style="left:1101px;top:77px;width:59px;height:18px;background:#ECE9D8;border-left:1px solid #fff;border-top:1px solid #fff;border-right:1px solid #716F64;border-radius:3px 3px 0 0;box-shadow:inset -1px 0 0 #ACA899"></div>
<div class="t" style="left:1126px;top:80px;font-size:11px;transform:scaleX(0.989);transform-origin:0 0;">popis</div>
<div class="a" style="left:946px;top:74px;width:87px;height:23px;background:#FCFCEE;border-left:1px solid #fff;border-top:1px solid #fff;border-right:1px solid #716F64;border-radius:3px 3px 0 0;box-shadow:inset -1px 0 0 #ACA899"></div>
<div class="t" style="left:974px;top:79px;font-size:11px;transform:scaleX(0.889);transform-origin:0 0;">EKVITERM</div>
<div class="a" style="left:285px;top:96px;width:990px;height:1px;background:#fff"></div>
<div class="a" style="left:287px;top:97px;width:987px;height:707px;border:1px solid #ACA899;border-right-color:#fff;border-bottom-color:#fff"></div>
<div class="a" style="left:288px;top:98px;width:985px;height:705px;border:1px solid #716F64;border-right-color:#ECE9D8;border-bottom-color:#ECE9D8"></div>
<svg width="1280" height="820"><linearGradient id="tp10" x1="0" y1="0" x2="0.450" y2="1"><stop offset="0" stop-color="#fff"/><stop offset="0.5" stop-color="#E0E8FC"/><stop offset="1" stop-color="#94B0F4"/></linearGradient><rect x="294.5" y="80.5" width="10" height="11" fill="url(#tp10)" stroke="#8CA4EC"/><linearGradient id="tp11" x1="0" y1="0" x2="0.450" y2="1"><stop offset="0" stop-color="#fff"/><stop offset="0.5" stop-color="#E0E8FC"/><stop offset="1" stop-color="#94B0F4"/></linearGradient><rect x="345.5" y="80.5" width="10" height="11" fill="url(#tp11)" stroke="#8CA4EC"/><linearGradient id="tp12" x1="0" y1="0" x2="0.450" y2="1"><stop offset="0" stop-color="#fff"/><stop offset="0.5" stop-color="#E0E8FC"/><stop offset="1" stop-color="#94B0F4"/></linearGradient><rect x="407.5" y="80.5" width="10" height="11" fill="url(#tp12)" stroke="#8CA4EC"/><rect x="505.5" y="80.5" width="9" height="11" fill="#E8EEFC" stroke="#8CA4EC"/><path d="M508 83.5h5M508 85.5h5M508 87.5h4M508 89.5h5" stroke="#101010" stroke-width="1.200"/><linearGradient id="tp13" x1="0" y1="0" x2="0.450" y2="1"><stop offset="0" stop-color="#fff"/><stop offset="0.5" stop-color="#E0E8FC"/><stop offset="1" stop-color="#94B0F4"/></linearGradient><rect x="564.5" y="80.5" width="10" height="11" fill="url(#tp13)" stroke="#8CA4EC"/><linearGradient id="tp14" x1="0" y1="0" x2="0.450" y2="1"><stop offset="0" stop-color="#fff"/><stop offset="0.5" stop-color="#E0E8FC"/><stop offset="1" stop-color="#94B0F4"/></linearGradient><rect x="648.5" y="80.5" width="10" height="11" fill="url(#tp14)" stroke="#8CA4EC"/><rect x="725.5" y="80.5" width="9" height="11" fill="#E8EEFC" stroke="#8CA4EC"/><path d="M728 83.5h5M728 85.5h5M728 87.5h4M728 89.5h5" stroke="#101010" stroke-width="1.200"/><linearGradient id="tp15" x1="0" y1="0" x2="0.450" y2="1"><stop offset="0" stop-color="#fff"/><stop offset="0.5" stop-color="#E0E8FC"/><stop offset="1" stop-color="#94B0F4"/></linearGradient><rect x="785.5" y="80.5" width="10" height="11" fill="url(#tp15)" stroke="#8CA4EC"/><linearGradient id="tp16" x1="0" y1="0" x2="0.450" y2="1"><stop offset="0" stop-color="#fff"/><stop offset="0.5" stop-color="#E0E8FC"/><stop offset="1" stop-color="#94B0F4"/></linearGradient><rect x="849.5" y="80.5" width="10" height="11" fill="url(#tp16)" stroke="#8CA4EC"/><rect x="896.5" y="80.5" width="9" height="11" fill="#E8EEFC" stroke="#8CA4EC"/><path d="M899 83.5h5M899 85.5h5M899 87.5h4M899 89.5h5" stroke="#101010" stroke-width="1.200"/><linearGradient id="tp17" x1="0" y1="0" x2="0.450" y2="1"><stop offset="0" stop-color="#fff"/><stop offset="0.5" stop-color="#E0E8FC"/><stop offset="1" stop-color="#94B0F4"/></linearGradient><rect x="1041.5" y="80.5" width="10" height="11" fill="url(#tp17)" stroke="#8CA4EC"/><rect x="1109.5" y="80.5" width="9" height="11" fill="#E8EEFC" stroke="#8CA4EC"/><path d="M1112 83.5h5M1112 85.5h5M1112 87.5h4M1112 89.5h5" stroke="#101010" stroke-width="1.200"/><linearGradient id="tp18" x1="0" y1="0" x2="0.450" y2="1"><stop offset="0" stop-color="#fff"/><stop offset="0.5" stop-color="#E0E8FC"/><stop offset="1" stop-color="#94B0F4"/></linearGradient><rect x="956.5" y="78.5" width="10" height="11" fill="url(#tp18)" stroke="#8CA4EC"/></svg>
<div class="a" style="left:1254px;top:99px;width:18px;height:686px;background:linear-gradient(90deg,#ECE9D8,#F4F2EA 20%,#FDFDFB 50%,#FEFEFC)"></div>
<div class="a" style="left:1256px;top:99px;width:16px;height:16px;background:linear-gradient(135deg,#E0E8FC,#C0D0F8 50%,#B0C4F4);border:1px solid #fff;border-radius:2px;box-shadow:0 0 0 1px #B8C8F0 inset"></div>
<svg width="1280" height="994"><path d="M1260.5 108.5l3.500-3.500 3.500 3.500" fill="none" stroke="#4D6185" stroke-width="2"/></svg>
<div class="a" style="left:1256px;top:769px;width:16px;height:16px;background:linear-gradient(135deg,#E0E8FC,#C0D0F8 50%,#B0C4F4);border:1px solid #fff;border-radius:2px;box-shadow:0 0 0 1px #B8C8F0 inset"></div>
<svg width="1280" height="994"><path d="M1260.5 775.5l3.500 3.500 3.500-3.500" fill="none" stroke="#4D6185" stroke-width="2"/></svg>
<div class="a" style="left:1256px;top:116px;width:16px;height:16px;background:linear-gradient(90deg,#D0DCFC,#BCCCF8);border:1px solid #fff;border-radius:2px;box-shadow:0 0 0 1px #B0C0F0 inset"></div>
<svg width="1280" height="994"><path d="M1260 120.500h8M1260 122.500h8M1260 124.500h8M1260 126.500h8" stroke="#EEF4FE"/><path d="M1261 121.500h8M1261 123.500h8M1261 125.500h8M1261 127.500h8" stroke="#8CB0F8"/></svg>
<div class="a" style="left:289px;top:785px;width:966px;height:17px;background:linear-gradient(#ECE9D8,#F4F2EA 20%,#FDFDFB 50%,#FEFEFC)"></div>
<div class="a" style="left:289px;top:786px;width:16px;height:16px;background:linear-gradient(135deg,#E0E8FC,#C0D0F8 50%,#B0C4F4);border:1px solid #fff;border-radius:2px;box-shadow:0 0 0 1px #B8C8F0 inset"></div>
<svg width="1280" height="994"><path d="M298.5 790.5l-3.500 3.500 3.500 3.500" fill="none" stroke="#4D6185" stroke-width="2"/></svg>
<div class="a" style="left:1238px;top:786px;width:17px;height:16px;background:linear-gradient(135deg,#E0E8FC,#C0D0F8 50%,#B0C4F4);border:1px solid #fff;border-radius:2px;box-shadow:0 0 0 1px #B8C8F0 inset"></div>
<svg width="1280" height="994"><path d="M1245 790.5l3.500 3.500-3.500 3.500" fill="none" stroke="#4D6185" stroke-width="2"/></svg>
<div class="a" style="left:306px;top:786px;width:17px;height:16px;background:linear-gradient(#D0DCFC,#BCCCF8);border:1px solid #fff;border-radius:2px;box-shadow:0 0 0 1px #B0C0F0 inset"></div>
<svg width="1280" height="994"><path d="M310.500 790v7M312.500 790v7M314.500 790v7M316.500 790v7" stroke="#EEF4FE"/><path d="M311.500 791v7M313.500 791v7M315.500 791v7M317.500 791v7" stroke="#8CB0F8"/></svg>
<svg width="1280" height="994" style="will-change:transform" shape-rendering="auto"><defs><pattern id="grid" x="297" y="107" width="8" height="8" patternUnits="userSpaceOnUse"><rect x="0" y="0" width="1" height="1" fill="#000"/></pattern></defs><rect x="289" y="99" width="961" height="681" fill="#ECE9D8"/><rect x="290" y="100" width="959" height="679" fill="url(#grid)"/><path d="M289.500 780V99.500H1250" fill="none" stroke="#000"/><path d="M1249.500 100V779.500H290" fill="none" stroke="#000"/><rect x="353" y="125" width="81" height="13" fill="#fff"/><path d="M434 139v-3.500l-3.500 3.500z" fill="#000"/><text x="359.533" y="135" font-size="10" font-family="Liberation Sans" textLength="67.9342" lengthAdjust="spacingAndGlyphs">teplotaÚTza</text><rect x="329" y="221" width="105" height="13" fill="#fff"/><path d="M434 235v-3.500l-3.500 3.500z" fill="#000"/><text x="335.616" y="231" font-size="10" font-family="Liberation Sans" textLength="91.7684" lengthAdjust="spacingAndGlyphs">VenkovniTeplota</text><rect x="401" y="237" width="33" height="13" fill="#fff"/><path d="M434 251v-3.500l-3.500 3.500z" fill="#000"/><text x="405.592" y="247" font-size="10" font-family="Liberation Sans" textLength="23.8157" lengthAdjust="spacingAndGlyphs">nútv</text><rect x="313" y="309" width="57" height="13" fill="#fff"/><path d="M370 323v-3.500l-3.500 3.500z" fill="#000"/><text x="317.343" y="319" font-size="10" font-family="Liberation Sans" textLength="48.3144" lengthAdjust="spacingAndGlyphs">menuÚT</text><rect x="337" y="557" width="41" height="13" fill="#fff"/><path d="M378 571v-3.500l-3.500 3.500z" fill="#000"/><text x="343.497" y="567" font-size="10" font-family="Liberation Sans" textLength="28.0055" lengthAdjust="spacingAndGlyphs">tTVP</text><rect x="297" y="589" width="81" height="13" fill="#fff"/><path d="M378 603v-3.500l-3.500 3.500z" fill="#000"/><text x="303.533" y="599" font-size="10" font-family="Liberation Sans" textLength="67.9342" lengthAdjust="spacingAndGlyphs">teplotaÚTza</text><rect x="321" y="613" width="57" height="13" fill="#fff"/><path d="M378 627v-3.500l-3.500 3.500z" fill="#000"/><text x="325.697" y="623" font-size="10" font-family="Liberation Sans" textLength="47.6068" lengthAdjust="spacingAndGlyphs">servoÚT</text><rect x="1049" y="549" width="49" height="13" fill="#fff"/><path d="M1098 563v-3.500l-3.500 3.500z" fill="#000"/><text x="1054.94" y="559" font-size="10" font-family="Liberation Sans" textLength="37.1109" lengthAdjust="spacingAndGlyphs">infoÚT</text><rect x="1073" y="597" width="41" height="13" fill="#fff"/><path d="M1114 611v-3.500l-3.500 3.500z" fill="#000"/><text x="1079.5" y="607" font-size="10" font-family="Liberation Sans" textLength="28.0055" lengthAdjust="spacingAndGlyphs">tTVP</text><rect x="985" y="605" width="81" height="13" fill="#fff"/><path d="M1066 619v-3.500l-3.500 3.500z" fill="#000"/><text x="991.533" y="615" font-size="10" font-family="Liberation Sans" textLength="67.9342" lengthAdjust="spacingAndGlyphs">teplotaÚTza</text><rect x="905" y="613" width="57" height="13" fill="#fff"/><path d="M962 627v-3.500l-3.500 3.500z" fill="#000"/><text x="909.697" y="623" font-size="10" font-family="Liberation Sans" textLength="47.6068" lengthAdjust="spacingAndGlyphs">servoÚT</text><rect x="1009" y="621" width="105" height="13" fill="#fff"/><path d="M1114 635v-3.500l-3.500 3.500z" fill="#000"/><text x="1015.62" y="631" font-size="10" font-family="Liberation Sans" textLength="91.7684" lengthAdjust="spacingAndGlyphs">VenkovniTeplota</text><rect x="529" y="269" width="41" height="13" fill="#fff"/><path d="M570 283v-3.500l-3.500 3.500z" fill="#000"/><text x="535.497" y="279" font-size="10" font-family="Liberation Sans" textLength="28.0055" lengthAdjust="spacingAndGlyphs">tTVP</text><rect x="825" y="125" width="73" height="13" fill="#fff"/><path d="M898 139v-3.500l-3.500 3.500z" fill="#000"/><text x="831.747" y="135" font-size="10" font-family="Liberation Sans" textLength="59.5055" lengthAdjust="spacingAndGlyphs">zÚTproHU</text><rect x="841" y="221" width="57" height="13" fill="#fff"/><path d="M898 235v-3.500l-3.500 3.500z" fill="#000"/><text x="845.697" y="231" font-size="10" font-family="Liberation Sans" textLength="47.6068" lengthAdjust="spacingAndGlyphs">servoÚT</text><rect x="849" y="277" width="49" height="13" fill="#fff"/><path d="M898 291v-3.500l-3.500 3.500z" fill="#000"/><text x="856.695" y="287" font-size="10" font-family="Liberation Sans" textLength="33.6103" lengthAdjust="spacingAndGlyphs">ledUT</text><rect x="865" y="317" width="33" height="13" fill="#fff"/><path d="M898 331v-3.500l-3.500 3.500z" fill="#000"/><text x="869.592" y="327" font-size="10" font-family="Liberation Sans" textLength="23.8157" lengthAdjust="spacingAndGlyphs">nútv</text><rect x="481" y="429" width="89" height="13" fill="#fff"/><path d="M570 443v-3.500l-3.500 3.500z" fill="#000"/><text x="487.688" y="439" font-size="10" font-family="Liberation Sans" textLength="75.6246" lengthAdjust="spacingAndGlyphs">menuČerpÚT</text><rect x="585" y="437" width="89" height="13" fill="#fff"/><path d="M674 451v-3.500l-3.500 3.500z" fill="#000"/><text x="590.279" y="447" font-size="10" font-family="Liberation Sans" textLength="78.4424" lengthAdjust="spacingAndGlyphs">menuVentilTV</text><path d="M433.5 131.5 L641.5 131.5" fill="none" stroke="#000" stroke-width="1"/><path d="M689.5 131.5 L825.5 131.5" fill="none" stroke="#000" stroke-width="1"/><path d="M609.5 131.5 L609.5 219.5" fill="none" stroke="#000" stroke-width="1"/><path d="M721.5 131.5 L721.5 235.5 L737.5 235.5" fill="none" stroke="#000" stroke-width="1"/><path d="M433.5 227.5 L473.5 227.5" fill="none" stroke="#000" stroke-width="1"/><path d="M433.5 243.5 L473.5 243.5" fill="none" stroke="#000" stroke-width="1"/><path d="M529.5 227.5 L609.5 227.5" fill="none" stroke="#000" stroke-width="1"/><path d="M529.5 227.5 L529.5 275.5" fill="none" stroke="#000" stroke-width="1"/><path d="M657.5 227.5 L737.5 227.5" fill="none" stroke="#000" stroke-width="1"/><path d="M793.5 227.5 L841.5 227.5" fill="none" stroke="#000" stroke-width="1"/><path d="M793.5 227.5 L793.5 267.5" fill="none" stroke="#000" stroke-width="1"/><path d="M777.5 291.5 L793.5 291.5" fill="none" stroke="#000" stroke-width="1"/><path d="M833.5 283.5 L849.5 283.5" fill="none" stroke="#000" stroke-width="1"/><path d="M801.5 323.5 L865.5 323.5" fill="none" stroke="#000" stroke-width="1"/><path d="M369.5 315.5 L393.5 315.5" fill="none" stroke="#000" stroke-width="1"/><path d="M457.5 323.5 L473.5 323.5 L473.5 251.5" fill="none" stroke="#000" stroke-width="1"/><path d="M457.5 331.5 L737.5 331.5 L737.5 251.5" fill="none" stroke="#000" stroke-width="1"/><path d="M457.5 339.5 L753.5 339.5" fill="none" stroke="#000" stroke-width="1"/><path d="M457.5 403.5 L457.5 419.5 L393.5 419.5 L393.5 435.5" fill="none" stroke="#000" stroke-width="1"/><path d="M457.5 435.5 L481.5 435.5" fill="none" stroke="#000" stroke-width="1"/><path d="M457.5 443.5 L585.5 443.5" fill="none" stroke="#000" stroke-width="1"/><path d="M377.5 563.5 L457.5 603.5" fill="none" stroke="#000" stroke-width="1"/><path d="M377.5 595.5 L457.5 611.5" fill="none" stroke="#000" stroke-width="1"/><path d="M377.5 619.5 L457.5 619.5" fill="none" stroke="#000" stroke-width="1"/><path d="M1097.5 555.5 L1145.5 555.5" fill="none" stroke="#000" stroke-width="1"/><path d="M1113.5 603.5 L1145.5 603.5" fill="none" stroke="#000" stroke-width="1"/><path d="M1065.5 611.5 L1145.5 611.5" fill="none" stroke="#000" stroke-width="1"/><path d="M961.5 619.5 L1145.5 619.5" fill="none" stroke="#000" stroke-width="1"/><path d="M1113.5 627.5 L1145.5 627.5" fill="none" stroke="#000" stroke-width="1"/><path d="M473.5 227.5h8" stroke="#000"/><path d="M473.5 243.5h8" stroke="#000"/><path d="M473.5 251.5h8" stroke="#000"/><path d="M529.5 227.5h-8" stroke="#000"/><path d="M641.5 123.5h8" stroke="#000"/><path d="M641.5 131.5h8" stroke="#000"/><path d="M641.5 139.5h8" stroke="#000"/><path d="M689.5 131.5h-8" stroke="#000"/><path d="M609.5 219.5h8" stroke="#000"/><path d="M609.5 227.5h8" stroke="#000"/><path d="M609.5 243.5h8" stroke="#000"/><path d="M657.5 219.5h-8" stroke="#000"/><path d="M657.5 227.5h-8" stroke="#000"/><path d="M657.5 235.5h-8" stroke="#000"/><path d="M737.5 219.5h8" stroke="#000"/><path d="M737.5 227.5h8" stroke="#000"/><path d="M737.5 235.5h8" stroke="#000"/><path d="M737.5 251.5h8" stroke="#000"/><path d="M793.5 227.5h-8" stroke="#000"/><path d="M793.5 267.5h8" stroke="#000"/><path d="M793.5 291.5h8" stroke="#000"/><path d="M833.5 267.5h-8" stroke="#000"/><path d="M833.5 275.5h-8" stroke="#000"/><path d="M833.5 283.5h-8" stroke="#000"/><path d="M833.5 291.5h-8" stroke="#000"/><path d="M801.5 323.5h-8" stroke="#000"/><path d="M801.5 331.5h-8" stroke="#000"/><path d="M753.5 339.5h8" stroke="#000"/><path d="M457.5 315.5h-8" stroke="#000"/><path d="M457.5 323.5h-8" stroke="#000"/><path d="M457.5 331.5h-8" stroke="#000"/><path d="M457.5 339.5h-8" stroke="#000"/><path d="M393.5 363.5h8" stroke="#000"/><path d="M457.5 363.5h-8" stroke="#000"/><path d="M393.5 371.5h8" stroke="#000"/><path d="M457.5 371.5h-8" stroke="#000"/><path d="M393.5 379.5h8" stroke="#000"/><path d="M457.5 379.5h-8" stroke="#000"/><path d="M393.5 387.5h8" stroke="#000"/><path d="M457.5 387.5h-8" stroke="#000"/><path d="M457.5 403.5h-8" stroke="#000"/><path d="M393.5 315.5h8" stroke="#000"/><path d="M457.5 435.5h-8" stroke="#000"/><path d="M457.5 443.5h-8" stroke="#000"/><path d="M457.5 451.5h-8" stroke="#000"/><path d="M457.5 459.5h-8" stroke="#000"/><path d="M393.5 483.5h8" stroke="#000"/><path d="M457.5 483.5h-8" stroke="#000"/><path d="M393.5 491.5h8" stroke="#000"/><path d="M457.5 491.5h-8" stroke="#000"/><path d="M393.5 499.5h8" stroke="#000"/><path d="M457.5 499.5h-8" stroke="#000"/><path d="M393.5 507.5h8" stroke="#000"/><path d="M457.5 507.5h-8" stroke="#000"/><path d="M457.5 523.5h-8" stroke="#000"/><path d="M393.5 435.5h8" stroke="#000"/><path d="M1209.5 555.5h-8" stroke="#000"/><path d="M1209.5 563.5h-8" stroke="#000"/><path d="M1209.5 571.5h-8" stroke="#000"/><path d="M1209.5 579.5h-8" stroke="#000"/><path d="M1145.5 603.5h8" stroke="#000"/><path d="M1209.5 603.5h-8" stroke="#000"/><path d="M1145.5 611.5h8" stroke="#000"/><path d="M1209.5 611.5h-8" stroke="#000"/><path d="M1145.5 619.5h8" stroke="#000"/><path d="M1209.5 619.5h-8" stroke="#000"/><path d="M1145.5 627.5h8" stroke="#000"/><path d="M1209.5 627.5h-8" stroke="#000"/><path d="M1209.5 643.5h-8" stroke="#000"/><path d="M1145.5 555.5h8" stroke="#000"/><path d="M457.500 603.5h8" stroke="#000"/><path d="M457.500 611.5h8" stroke="#000"/><path d="M457.500 619.5h8" stroke="#000"/><path d="M457.500 627.5h8" stroke="#000"/><rect x="481.5" y="211.5" width="39" height="47" fill="#FFCCCC" stroke="#000" stroke-width="1"/><rect x="482" y="212" width="38" height="9" fill="#ECE9D8"/><path d="M482 221.500h38" stroke="#000080"/><text x="483" y="220" font-size="9.6" font-family="Liberation Sans" font-weight="bold" fill="#000" textLength="36" lengthAdjust="spacingAndGlyphs" text-anchor="start">EKVITERM</text><text x="483" y="231" font-size="9.6" font-family="Liberation Sans" font-weight="bold" fill="#000" textLength="6.5" lengthAdjust="spacingAndGlyphs" text-anchor="start">IN</text><text x="519" y="231" font-size="9.6" font-family="Liberation Sans" font-weight="bold" fill="#000" textLength="11.5" lengthAdjust="spacingAndGlyphs" text-anchor="end">OUT</text><text x="483" y="247" font-size="9.6" font-family="Liberation Sans" font-weight="bold" fill="#000" textLength="27" lengthAdjust="spacingAndGlyphs" text-anchor="start">KOREKCE</text><text x="483" y="255" font-size="9.6" font-family="Liberation Sans" font-weight="bold" fill="#000" textLength="17" lengthAdjust="spacingAndGlyphs" text-anchor="start">MENU</text><rect x="649.5" y="107.5" width="31" height="39" fill="#FFCCCC" stroke="#000" stroke-width="1"/><rect x="650" y="108" width="30" height="10" fill="#F4F2EA"/><path d="M650 118.500h30" stroke="#0000A0"/><path d="M652 114l4-5 2 2-4 5z" fill="#E8E820" stroke="#606000" stroke-width=".6"/><text x="659" y="117" font-size="9.6" font-family="Liberation Sans" font-weight="bold" fill="#000" textLength="21" lengthAdjust="spacingAndGlyphs" text-anchor="start">2-STAV</text><path d="M651 127l2-3.500 2 3.500zM651 143l2-3.500 2 3.500z" fill="#000"/><text x="655" y="127" font-size="9.6" font-family="Liberation Sans" font-weight="bold" fill="#000" textLength="4.5" lengthAdjust="spacingAndGlyphs" text-anchor="start">H</text><text x="651" y="135" font-size="9.6" font-family="Liberation Sans" font-weight="bold" fill="#000" textLength="6.5" lengthAdjust="spacingAndGlyphs" text-anchor="start">IN</text><text x="655" y="143" font-size="9.6" font-family="Liberation Sans" font-weight="bold" fill="#000" textLength="4.5" lengthAdjust="spacingAndGlyphs" text-anchor="start">N</text><text x="679" y="135" font-size="9.6" font-family="Liberation Sans" font-weight="bold" fill="#000" textLength="11.5" lengthAdjust="spacingAndGlyphs" text-anchor="end">OUT</text><rect x="617.5" y="203.5" width="31" height="47" fill="#FFCCCC" stroke="#000" stroke-width="1"/><rect x="626" y="206" width="14" height="8" fill="#C0C0C0"/><text x="627" y="213" font-size="9.6" font-family="Liberation Sans" font-weight="bold" fill="#000" textLength="12" lengthAdjust="spacingAndGlyphs" text-anchor="start">PID</text><text x="619" y="223" font-size="9.5" font-family="Liberation Sans" font-weight="bold" fill="#000" textLength="11" lengthAdjust="spacingAndGlyphs" text-anchor="start">Tuz</text><text x="619" y="231" font-size="9.5" font-family="Liberation Sans" font-weight="bold" fill="#000" textLength="11" lengthAdjust="spacingAndGlyphs" text-anchor="start">Tup</text><text x="619" y="247" font-size="9.6" font-family="Liberation Sans" font-weight="bold" fill="#000" textLength="17" lengthAdjust="spacingAndGlyphs" text-anchor="start">MENU</text><text x="647" y="223" font-size="9.5" font-family="Liberation Sans" font-weight="bold" fill="#000" textLength="11" lengthAdjust="spacingAndGlyphs" text-anchor="end">Tau</text><text x="647" y="231" font-size="9.5" font-family="Liberation Sans" font-weight="bold" fill="#000" textLength="14" lengthAdjust="spacingAndGlyphs" text-anchor="end">Stau</text><text x="647" y="239" font-size="9.5" font-family="Liberation Sans" font-weight="bold" fill="#000" textLength="14" lengthAdjust="spacingAndGlyphs" text-anchor="end">Klav</text><rect x="745.5" y="211.5" width="39" height="47" fill="#FFCCCC" stroke="#000" stroke-width="1"/><text x="747" y="223" font-size="9.5" font-family="Liberation Sans" font-weight="bold" fill="#000" textLength="16" lengthAdjust="spacingAndGlyphs" text-anchor="start">100%</text><text x="747" y="231" font-size="9.6" font-family="Liberation Sans" font-weight="bold" fill="#000" textLength="6.5" lengthAdjust="spacingAndGlyphs" text-anchor="start">IN</text><text x="747" y="239" font-size="9.5" font-family="Liberation Sans" font-weight="bold" fill="#000" textLength="8" lengthAdjust="spacingAndGlyphs" text-anchor="start">0%</text><text x="747" y="255" font-size="9.6" font-family="Liberation Sans" font-weight="bold" fill="#000" textLength="17" lengthAdjust="spacingAndGlyphs" text-anchor="start">MENU</text><text x="783" y="231" font-size="9.6" font-family="Liberation Sans" font-weight="bold" fill="#000" textLength="11.5" lengthAdjust="spacingAndGlyphs" text-anchor="end">OUT</text><rect x="758" y="236" width="25" height="8" fill="#20E0F0"/><text x="758.5" y="243.5" font-size="9.6" font-family="Liberation Sans" font-weight="bold" fill="#F00000" textLength="5" lengthAdjust="spacingAndGlyphs" text-anchor="start">A</text><text x="763.5" y="243.5" font-size="9.5" font-family="Liberation Sans" font-weight="bold" fill="#000" textLength="19" lengthAdjust="spacingAndGlyphs" text-anchor="start">Servo</text><rect x="801.5" y="259.5" width="23" height="39" fill="#00FFFF" stroke="#000" stroke-width="1"/><text x="803" y="271" font-size="9.6" font-family="Liberation Sans" font-weight="bold" fill="#000" textLength="5" lengthAdjust="spacingAndGlyphs" text-anchor="start">A</text><text x="803" y="295" font-size="9.6" font-family="Liberation Sans" font-weight="bold" fill="#000" textLength="5" lengthAdjust="spacingAndGlyphs" text-anchor="start">B</text><rect x="810" y="264" width="4" height="6" fill="#C0C0C0"/><path d="M810 266.500h4M810 268.500h4" stroke="#404040" stroke-width=".8"/><text x="823" y="271" font-size="9.6" font-family="Liberation Sans" font-weight="bold" fill="#000" textLength="5" lengthAdjust="spacingAndGlyphs" text-anchor="end">U</text><text x="823" y="279" font-size="9.5" font-family="Liberation Sans" font-weight="bold" fill="#000" textLength="11" lengthAdjust="spacingAndGlyphs" text-anchor="end">U=0</text><text x="823" y="287" font-size="9.5" font-family="Liberation Sans" font-weight="bold" fill="#000" textLength="11" lengthAdjust="spacingAndGlyphs" text-anchor="end">U&gt;0</text><text x="823" y="295" font-size="9.5" font-family="Liberation Sans" font-weight="bold" fill="#000" textLength="11" lengthAdjust="spacingAndGlyphs" text-anchor="end">U&gt;0</text><path d="M812 288.500h11" stroke="#000"/><rect x="745" y="285" width="33" height="13" fill="#00FF00"/><text x="753" y="295.500" font-size="10.500" font-family="Liberation Sans" textLength="18" lengthAdjust="spacingAndGlyphs">1,0</text><rect x="761.5" y="307.5" width="31" height="39" fill="#FFCCCC" stroke="#000" stroke-width="1"/><rect x="762" y="308" width="30" height="9" fill="#ECE9D8"/><path d="M762 318h30" stroke="#8060C8" stroke-width="2"/><rect x="764" y="309" width="6" height="7" rx="1.500" fill="#F08020" stroke="#803000" stroke-width=".7"/><text x="772" y="316.5" font-size="9.6" font-family="Liberation Sans" font-weight="bold" fill="#000" textLength="19" lengthAdjust="spacingAndGlyphs" text-anchor="start">TIMER</text><text x="791" y="327" font-size="9.6" font-family="Liberation Sans" font-weight="bold" fill="#000" textLength="4" lengthAdjust="spacingAndGlyphs" text-anchor="end">U</text><text x="791" y="335" font-size="9.5" font-family="Liberation Sans" font-weight="bold" fill="#000" textLength="14" lengthAdjust="spacingAndGlyphs" text-anchor="end">U&lt;&gt;0</text><text x="763" y="343" font-size="9.6" font-family="Liberation Sans" font-weight="bold" fill="#000" textLength="17" lengthAdjust="spacingAndGlyphs" text-anchor="start">MENU</text><rect x="401.5" y="307.5" width="47" height="103" fill="#28D0FF" stroke="#000" stroke-width="1"/><text x="403" y="319" font-size="10" font-family="Liberation Mono" font-weight="bold" textLength="8" lengthAdjust="spacingAndGlyphs">In</text><rect x="413" y="312" width="26" height="25" fill="#1818F0"/><text x="414.5" y="320" font-size="8.5" font-family="Liberation Sans" font-weight="bold" fill="#FFFFC0" textLength="23" lengthAdjust="spacingAndGlyphs" text-anchor="start">SCREEN</text><rect x="415.5" y="322.5" width="21" height="12" fill="#00FF00" stroke="#104010" stroke-width="1"/><text x="417" y="328" font-size="4.5" font-family="Liberation Sans"  fill="#003000" textLength="9" lengthAdjust="spacingAndGlyphs" text-anchor="start">Menu:</text><text x="442" y="318.5" font-size="9.500" font-family="Liberation Mono" font-weight="bold" textLength="6" lengthAdjust="spacingAndGlyphs">0</text><text x="442" y="326.5" font-size="9.500" font-family="Liberation Mono" font-weight="bold" textLength="6" lengthAdjust="spacingAndGlyphs">1</text><text x="442" y="334.5" font-size="9.500" font-family="Liberation Mono" font-weight="bold" textLength="6" lengthAdjust="spacingAndGlyphs">2</text><text x="442" y="342.5" font-size="9.500" font-family="Liberation Mono" font-weight="bold" textLength="6" lengthAdjust="spacingAndGlyphs">3</text><rect x="402" y="350" width="46" height="42" fill="#0000FF"/><text x="408" y="358" font-size="8.5" font-family="Liberation Sans" font-weight="bold" fill="#FFFF00" textLength="34" lengthAdjust="spacingAndGlyphs" text-anchor="start">VARIABLES</text><rect x="402" y="359" width="21" height="33" fill="#FF0000"/><rect x="428" y="359" width="20" height="33" fill="#00FF00"/><text x="403" y="366.5" font-size="9" font-family="Liberation Sans" font-weight="bold" fill="#500000" textLength="19" lengthAdjust="spacingAndGlyphs" text-anchor="start">DISP0</text><text x="429" y="366.5" font-size="9" font-family="Liberation Sans" font-weight="bold" fill="#003000" textLength="19" lengthAdjust="spacingAndGlyphs" text-anchor="start">EDIT0</text><text x="403" y="374.5" font-size="9" font-family="Liberation Sans" font-weight="bold" fill="#500000" textLength="19" lengthAdjust="spacingAndGlyphs" text-anchor="start">DISP1</text><text x="429" y="374.5" font-size="9" font-family="Liberation Sans" font-weight="bold" fill="#003000" textLength="19" lengthAdjust="spacingAndGlyphs" text-anchor="start">EDIT1</text><text x="403" y="382.5" font-size="9" font-family="Liberation Sans" font-weight="bold" fill="#500000" textLength="19" lengthAdjust="spacingAndGlyphs" text-anchor="start">DISP2</text><text x="429" y="382.5" font-size="9" font-family="Liberation Sans" font-weight="bold" fill="#003000" textLength="19" lengthAdjust="spacingAndGlyphs" text-anchor="start">EDIT2</text><text x="403" y="390.5" font-size="9" font-family="Liberation Sans" font-weight="bold" fill="#500000" textLength="19" lengthAdjust="spacingAndGlyphs" text-anchor="start">DISP3</text><text x="429" y="390.5" font-size="9" font-family="Liberation Sans" font-weight="bold" fill="#003000" textLength="19" lengthAdjust="spacingAndGlyphs" text-anchor="start">EDIT3</text><rect x="402" y="392" width="46" height="18" fill="#28D0FF"/><path d="M435 400.5h5q3 0 4 5" fill="none" stroke="#000" stroke-width="1.200"/><path d="M441 403l3 3.500 2.500-4z" fill="#000"/><rect x="401.5" y="427.5" width="47" height="103" fill="#28D0FF" stroke="#000" stroke-width="1"/><text x="403" y="439" font-size="10" font-family="Liberation Mono" font-weight="bold" textLength="8" lengthAdjust="spacingAndGlyphs">In</text><rect x="413" y="432" width="26" height="25" fill="#1818F0"/><text x="414.5" y="440" font-size="8.5" font-family="Liberation Sans" font-weight="bold" fill="#FFFFC0" textLength="23" lengthAdjust="spacingAndGlyphs" text-anchor="start">SCREEN</text><rect x="415.5" y="442.5" width="21" height="12" fill="#00FF00" stroke="#104010" stroke-width="1"/><text x="417" y="448" font-size="4.5" font-family="Liberation Sans"  fill="#003000" textLength="9" lengthAdjust="spacingAndGlyphs" text-anchor="start">Menu:</text><text x="442" y="438.5" font-size="9.500" font-family="Liberation Mono" font-weight="bold" textLength="6" lengthAdjust="spacingAndGlyphs">0</text><text x="442" y="446.5" font-size="9.500" font-family="Liberation Mono" font-weight="bold" textLength="6" lengthAdjust="spacingAndGlyphs">1</text><text x="442" y="454.5" font-size="9.500" font-family="Liberation Mono" font-weight="bold" textLength="6" lengthAdjust="spacingAndGlyphs">2</text><text x="442" y="462.5" font-size="9.500" font-family="Liberation Mono" font-weight="bold" textLength="6" lengthAdjust="spacingAndGlyphs">3</text><rect x="402" y="470" width="46" height="42" fill="#0000FF"/><text x="408" y="478" font-size="8.5" font-family="Liberation Sans" font-weight="bold" fill="#FFFF00" textLength="34" lengthAdjust="spacingAndGlyphs" text-anchor="start">VARIABLES</text><rect x="402" y="479" width="21" height="33" fill="#FF0000"/><rect x="428" y="479" width="20" height="33" fill="#00FF00"/><text x="403" y="486.5" font-size="9" font-family="Liberation Sans" font-weight="bold" fill="#500000" textLength="19" lengthAdjust="spacingAndGlyphs" text-anchor="start">DISP0</text><text x="429" y="486.5" font-size="9" font-family="Liberation Sans" font-weight="bold" fill="#003000" textLength="19" lengthAdjust="spacingAndGlyphs" text-anchor="start">EDIT0</text><text x="403" y="494.5" font-size="9" font-family="Liberation Sans" font-weight="bold" fill="#500000" textLength="19" lengthAdjust="spacingAndGlyphs" text-anchor="start">DISP1</text><text x="429" y="494.5" font-size="9" font-family="Liberation Sans" font-weight="bold" fill="#003000" textLength="19" lengthAdjust="spacingAndGlyphs" text-anchor="start">EDIT1</text><text x="403" y="502.5" font-size="9" font-family="Liberation Sans" font-weight="bold" fill="#500000" textLength="19" lengthAdjust="spacingAndGlyphs" text-anchor="start">DISP2</text><text x="429" y="502.5" font-size="9" font-family="Liberation Sans" font-weight="bold" fill="#003000" textLength="19" lengthAdjust="spacingAndGlyphs" text-anchor="start">EDIT2</text><text x="403" y="510.5" font-size="9" font-family="Liberation Sans" font-weight="bold" fill="#500000" textLength="19" lengthAdjust="spacingAndGlyphs" text-anchor="start">DISP3</text><text x="429" y="510.5" font-size="9" font-family="Liberation Sans" font-weight="bold" fill="#003000" textLength="19" lengthAdjust="spacingAndGlyphs" text-anchor="start">EDIT3</text><rect x="402" y="512" width="46" height="18" fill="#28D0FF"/><path d="M435 520.5h5q3 0 4 5" fill="none" stroke="#000" stroke-width="1.200"/><path d="M441 523l3 3.500 2.500-4z" fill="#000"/><rect x="1153.5" y="547.5" width="47" height="103" fill="#28D0FF" stroke="#000" stroke-width="1"/><text x="1155" y="559" font-size="10" font-family="Liberation Mono" font-weight="bold" textLength="8" lengthAdjust="spacingAndGlyphs">In</text><rect x="1165" y="552" width="26" height="25" fill="#1818F0"/><text x="1166.5" y="560" font-size="8.5" font-family="Liberation Sans" font-weight="bold" fill="#FFFFC0" textLength="23" lengthAdjust="spacingAndGlyphs" text-anchor="start">SCREEN</text><rect x="1167.5" y="562.5" width="21" height="12" fill="#00FF00" stroke="#104010" stroke-width="1"/><text x="1169" y="568" font-size="4.5" font-family="Liberation Sans"  fill="#003000" textLength="9" lengthAdjust="spacingAndGlyphs" text-anchor="start">Menu:</text><text x="1194" y="558.5" font-size="9.500" font-family="Liberation Mono" font-weight="bold" textLength="6" lengthAdjust="spacingAndGlyphs">0</text><text x="1194" y="566.5" font-size="9.500" font-family="Liberation Mono" font-weight="bold" textLength="6" lengthAdjust="spacingAndGlyphs">1</text><text x="1194" y="574.5" font-size="9.500" font-family="Liberation Mono" font-weight="bold" textLength="6" lengthAdjust="spacingAndGlyphs">2</text><text x="1194" y="582.5" font-size="9.500" font-family="Liberation Mono" font-weight="bold" textLength="6" lengthAdjust="spacingAndGlyphs">3</text><rect x="1154" y="590" width="46" height="42" fill="#0000FF"/><text x="1160" y="598" font-size="8.5" font-family="Liberation Sans" font-weight="bold" fill="#FFFF00" textLength="34" lengthAdjust="spacingAndGlyphs" text-anchor="start">VARIABLES</text><rect x="1154" y="599" width="21" height="33" fill="#FF0000"/><rect x="1180" y="599" width="20" height="33" fill="#00FF00"/><text x="1155" y="606.5" font-size="9" font-family="Liberation Sans" font-weight="bold" fill="#500000" textLength="19" lengthAdjust="spacingAndGlyphs" text-anchor="start">DISP0</text><text x="1181" y="606.5" font-size="9" font-family="Liberation Sans" font-weight="bold" fill="#003000" textLength="19" lengthAdjust="spacingAndGlyphs" text-anchor="start">EDIT0</text><text x="1155" y="614.5" font-size="9" font-family="Liberation Sans" font-weight="bold" fill="#500000" textLength="19" lengthAdjust="spacingAndGlyphs" text-anchor="start">DISP1</text><text x="1181" y="614.5" font-size="9" font-family="Liberation Sans" font-weight="bold" fill="#003000" textLength="19" lengthAdjust="spacingAndGlyphs" text-anchor="start">EDIT1</text><text x="1155" y="622.5" font-size="9" font-family="Liberation Sans" font-weight="bold" fill="#500000" textLength="19" lengthAdjust="spacingAndGlyphs" text-anchor="start">DISP2</text><text x="1181" y="622.5" font-size="9" font-family="Liberation Sans" font-weight="bold" fill="#003000" textLength="19" lengthAdjust="spacingAndGlyphs" text-anchor="start">EDIT2</text><text x="1155" y="630.5" font-size="9" font-family="Liberation Sans" font-weight="bold" fill="#500000" textLength="19" lengthAdjust="spacingAndGlyphs" text-anchor="start">DISP3</text><text x="1181" y="630.5" font-size="9" font-family="Liberation Sans" font-weight="bold" fill="#003000" textLength="19" lengthAdjust="spacingAndGlyphs" text-anchor="start">EDIT3</text><rect x="1154" y="632" width="46" height="18" fill="#28D0FF"/><path d="M1187 640.5h5q3 0 4 5" fill="none" stroke="#000" stroke-width="1.200"/><path d="M1193 643l3 3.500 2.500-4z" fill="#000"/><rect x="465.500" y="581.500" width="384" height="172" rx="3.500" fill="#C0C0C0" stroke="#000"/><path d="M466 599.5l4.500 4-4.500 4z" fill="#FF0000"/><path d="M466 607.5l4.500 4-4.500 4z" fill="#4080FF"/><path d="M466 615.5l4.500 4-4.500 4z" fill="#00E000"/><path d="M466 623.5l4.500 4-4.500 4z" fill="#FF00FF"/><path d="M905.500 779.500V703.500H1249.500M905.500 735.500H1249.500M985.500 751.500H1249.500M985.500 735.500V779.500M1121.500 703.500V779.500M1185.500 751.500V779.500" fill="none" stroke="#000"/><text x="909" y="713" font-size="8" font-family="Liberation Sans"  textLength="24" lengthAdjust="spacingAndGlyphs" stroke="#000" stroke-width=".3">Název:</text><text x="912" y="725.5" font-size="12" font-family="Liberation Sans" font-weight="bold" textLength="58" lengthAdjust="spacingAndGlyphs" >EKVITERM</text><text x="1125" y="713" font-size="8" font-family="Liberation Sans"  textLength="22" lengthAdjust="spacingAndGlyphs" stroke="#000" stroke-width=".3">Autor:</text><text x="1128" y="725.5" font-size="12" font-family="Liberation Sans" font-weight="bold" textLength="32" lengthAdjust="spacingAndGlyphs" >vacek</text><text x="989.5" y="746" font-size="8" font-family="Liberation Sans"  textLength="24" lengthAdjust="spacingAndGlyphs" stroke="#000" stroke-width=".3">Datum:</text><text x="1031" y="747" font-size="10" font-family="Liberation Sans" font-weight="bold" textLength="85" lengthAdjust="spacingAndGlyphs" >16. 1. 2008 - 06:34</text><text x="989.5" y="762" font-size="8" font-family="Liberation Sans"  textLength="61" lengthAdjust="spacingAndGlyphs" stroke="#000" stroke-width=".3">Číslo dokumentu:</text><text x="1125" y="762" font-size="8" font-family="Liberation Sans"  textLength="15" lengthAdjust="spacingAndGlyphs" stroke="#000" stroke-width=".3">List:</text><text x="1127" y="771.5" font-size="9.5" font-family="Liberation Sans" font-weight="bold" textLength="15" lengthAdjust="spacingAndGlyphs" >X/Y</text><text x="1190" y="762" font-size="8" font-family="Liberation Sans"  textLength="27" lengthAdjust="spacingAndGlyphs" stroke="#000" stroke-width=".3">Revize:</text><text x="1191" y="771.5" font-size="9.5" font-family="Liberation Sans" font-weight="bold" textLength="5" lengthAdjust="spacingAndGlyphs" >0</text><rect x="431.5" y="129.5" width="4" height="4" rx="1.300" fill="#FF0000" stroke="#000" stroke-width="1"/><rect x="431.5" y="225.5" width="4" height="4" rx="1.300" fill="#FF0000" stroke="#000" stroke-width="1"/><rect x="431.5" y="241.5" width="4" height="4" rx="1.300" fill="#FF0000" stroke="#000" stroke-width="1"/><rect x="367.5" y="313.5" width="4" height="4" rx="1.300" fill="#4080FF" stroke="#000" stroke-width="1"/><rect x="375.5" y="561.5" width="4" height="4" rx="1.300" fill="#FF0000" stroke="#000" stroke-width="1"/><rect x="375.5" y="593.5" width="4" height="4" rx="1.300" fill="#FF0000" stroke="#000" stroke-width="1"/><rect x="375.5" y="617.5" width="4" height="4" rx="1.300" fill="#FF0000" stroke="#000" stroke-width="1"/><rect x="1095.5" y="553.5" width="4" height="4" rx="1.300" fill="#4080FF" stroke="#000" stroke-width="1"/><rect x="1111.5" y="601.5" width="4" height="4" rx="1.300" fill="#FF0000" stroke="#000" stroke-width="1"/><rect x="1063.5" y="609.5" width="4" height="4" rx="1.300" fill="#FF0000" stroke="#000" stroke-width="1"/><rect x="959.5" y="617.5" width="4" height="4" rx="1.300" fill="#FF0000" stroke="#000" stroke-width="1"/><rect x="1111.5" y="625.5" width="4" height="4" rx="1.300" fill="#FF0000" stroke="#000" stroke-width="1"/><rect x="527.5" y="273.5" width="4" height="4" rx="1.300" fill="#FF0000" stroke="#000" stroke-width="1"/><rect x="823.5" y="129.5" width="4" height="4" rx="1.300" fill="#4080FF" stroke="#000" stroke-width="1"/><rect x="839.5" y="225.5" width="4" height="4" rx="1.300" fill="#FF0000" stroke="#000" stroke-width="1"/><rect x="847.5" y="281.5" width="4" height="4" rx="1.300" fill="#4080FF" stroke="#000" stroke-width="1"/><rect x="863.5" y="321.5" width="4" height="4" rx="1.300" fill="#FF0000" stroke="#000" stroke-width="1"/><rect x="479.5" y="433.5" width="4" height="4" rx="1.300" fill="#4080FF" stroke="#000" stroke-width="1"/><rect x="583.5" y="441.5" width="4" height="4" rx="1.300" fill="#4080FF" stroke="#000" stroke-width="1"/><circle cx="609.5" cy="131.5" r="2.900" fill="#000"/><circle cx="721.5" cy="131.5" r="2.900" fill="#000"/><rect x="471.5" y="225.5" width="4" height="4" rx="1.300" fill="#FF0000" stroke="#000" stroke-width="1"/><rect x="471.5" y="241.5" width="4" height="4" rx="1.300" fill="#FF0000" stroke="#000" stroke-width="1"/><rect x="471.5" y="249.5" width="4" height="4" rx="1.300" fill="#4080FF" stroke="#000" stroke-width="1"/><rect x="527.5" y="225.5" width="4" height="4" rx="1.300" fill="#FF0000" stroke="#000" stroke-width="1"/><rect x="639.5" y="121.5" width="4" height="4" rx="1.300" fill="#C8C8C8" stroke="#000" stroke-width="1"/><rect x="639.5" y="129.5" width="4" height="4" rx="1.300" fill="#FF0000" stroke="#000" stroke-width="1"/><rect x="639.5" y="137.5" width="4" height="4" rx="1.300" fill="#C8C8C8" stroke="#000" stroke-width="1"/><rect x="687.5" y="129.5" width="4" height="4" rx="1.300" fill="#4080FF" stroke="#000" stroke-width="1"/><rect x="607.5" y="217.5" width="4" height="4" rx="1.300" fill="#FF0000" stroke="#000" stroke-width="1"/><rect x="607.5" y="225.5" width="4" height="4" rx="1.300" fill="#FF0000" stroke="#000" stroke-width="1"/><rect x="607.5" y="241.5" width="4" height="4" rx="1.300" fill="#C8C8C8" stroke="#000" stroke-width="1"/><rect x="655.5" y="217.5" width="4" height="4" rx="1.300" fill="#FF0000" stroke="#000" stroke-width="1"/><rect x="655.5" y="225.5" width="4" height="4" rx="1.300" fill="#FF0000" stroke="#000" stroke-width="1"/><rect x="655.5" y="233.5" width="4" height="4" rx="1.300" fill="#4080FF" stroke="#000" stroke-width="1"/><rect x="735.5" y="217.5" width="4" height="4" rx="1.300" fill="#C8C8C8" stroke="#000" stroke-width="1"/><rect x="735.5" y="225.5" width="4" height="4" rx="1.300" fill="#FF0000" stroke="#000" stroke-width="1"/><rect x="735.5" y="233.5" width="4" height="4" rx="1.300" fill="#4080FF" stroke="#000" stroke-width="1"/><rect x="735.5" y="249.5" width="4" height="4" rx="1.300" fill="#4080FF" stroke="#000" stroke-width="1"/><rect x="791.5" y="225.5" width="4" height="4" rx="1.300" fill="#FF0000" stroke="#000" stroke-width="1"/><rect x="791.5" y="265.5" width="4" height="4" rx="1.300" fill="#FF0000" stroke="#000" stroke-width="1"/><rect x="791.5" y="289.5" width="4" height="4" rx="1.300" fill="#FF0000" stroke="#000" stroke-width="1"/><rect x="831.5" y="265.5" width="4" height="4" rx="1.300" fill="#FF0000" stroke="#000" stroke-width="1"/><rect x="831.5" y="273.5" width="4" height="4" rx="1.300" fill="#4080FF" stroke="#000" stroke-width="1"/><rect x="831.5" y="281.5" width="4" height="4" rx="1.300" fill="#4080FF" stroke="#000" stroke-width="1"/><rect x="831.5" y="289.5" width="4" height="4" rx="1.300" fill="#4080FF" stroke="#000" stroke-width="1"/><circle cx="827.500" cy="291.500" r="2" fill="#fff" stroke="#000"/><rect x="775.5" y="289.5" width="4" height="4" rx="1.300" fill="#FF0000" stroke="#000" stroke-width="1"/><rect x="799.5" y="321.5" width="4" height="4" rx="1.300" fill="#FF0000" stroke="#000" stroke-width="1"/><rect x="799.5" y="329.5" width="4" height="4" rx="1.300" fill="#4080FF" stroke="#000" stroke-width="1"/><rect x="751.5" y="337.5" width="4" height="4" rx="1.300" fill="#4080FF" stroke="#000" stroke-width="1"/><rect x="455.5" y="313.5" width="4" height="4" rx="1.300" fill="#4080FF" stroke="#000" stroke-width="1"/><rect x="455.5" y="321.5" width="4" height="4" rx="1.300" fill="#4080FF" stroke="#000" stroke-width="1"/><rect x="455.5" y="329.5" width="4" height="4" rx="1.300" fill="#4080FF" stroke="#000" stroke-width="1"/><rect x="455.5" y="337.5" width="4" height="4" rx="1.300" fill="#4080FF" stroke="#000" stroke-width="1"/><rect x="391.5" y="361.5" width="4" height="4" rx="1.300" fill="#C8C8C8" stroke="#000" stroke-width="1"/><rect x="455.5" y="361.5" width="4" height="4" rx="1.300" fill="#FF0000" stroke="#000" stroke-width="1"/><rect x="391.5" y="369.5" width="4" height="4" rx="1.300" fill="#C8C8C8" stroke="#000" stroke-width="1"/><rect x="455.5" y="369.5" width="4" height="4" rx="1.300" fill="#FF0000" stroke="#000" stroke-width="1"/><rect x="391.5" y="377.5" width="4" height="4" rx="1.300" fill="#C8C8C8" stroke="#000" stroke-width="1"/><rect x="455.5" y="377.5" width="4" height="4" rx="1.300" fill="#FF0000" stroke="#000" stroke-width="1"/><rect x="391.5" y="385.5" width="4" height="4" rx="1.300" fill="#C8C8C8" stroke="#000" stroke-width="1"/><rect x="455.5" y="385.5" width="4" height="4" rx="1.300" fill="#FF0000" stroke="#000" stroke-width="1"/><rect x="455.5" y="401.5" width="4" height="4" rx="1.300" fill="#4080FF" stroke="#000" stroke-width="1"/><rect x="391.5" y="313.5" width="4" height="4" rx="1.300" fill="#4080FF" stroke="#000" stroke-width="1"/><rect x="455.5" y="433.5" width="4" height="4" rx="1.300" fill="#4080FF" stroke="#000" stroke-width="1"/><rect x="455.5" y="441.5" width="4" height="4" rx="1.300" fill="#4080FF" stroke="#000" stroke-width="1"/><rect x="455.5" y="449.5" width="4" height="4" rx="1.300" fill="#4080FF" stroke="#000" stroke-width="1"/><rect x="455.5" y="457.5" width="4" height="4" rx="1.300" fill="#4080FF" stroke="#000" stroke-width="1"/><rect x="391.5" y="481.5" width="4" height="4" rx="1.300" fill="#C8C8C8" stroke="#000" stroke-width="1"/><rect x="455.5" y="481.5" width="4" height="4" rx="1.300" fill="#FF0000" stroke="#000" stroke-width="1"/><rect x="391.5" y="489.5" width="4" height="4" rx="1.300" fill="#C8C8C8" stroke="#000" stroke-width="1"/><rect x="455.5" y="489.5" width="4" height="4" rx="1.300" fill="#FF0000" stroke="#000" stroke-width="1"/><rect x="391.5" y="497.5" width="4" height="4" rx="1.300" fill="#C8C8C8" stroke="#000" stroke-width="1"/><rect x="455.5" y="497.5" width="4" height="4" rx="1.300" fill="#FF0000" stroke="#000" stroke-width="1"/><rect x="391.5" y="505.5" width="4" height="4" rx="1.300" fill="#C8C8C8" stroke="#000" stroke-width="1"/><rect x="455.5" y="505.5" width="4" height="4" rx="1.300" fill="#FF0000" stroke="#000" stroke-width="1"/><rect x="455.5" y="521.5" width="4" height="4" rx="1.300" fill="#4080FF" stroke="#000" stroke-width="1"/><rect x="391.5" y="433.5" width="4" height="4" rx="1.300" fill="#4080FF" stroke="#000" stroke-width="1"/><rect x="1207.5" y="553.5" width="4" height="4" rx="1.300" fill="#4080FF" stroke="#000" stroke-width="1"/><rect x="1207.5" y="561.5" width="4" height="4" rx="1.300" fill="#4080FF" stroke="#000" stroke-width="1"/><rect x="1207.5" y="569.5" width="4" height="4" rx="1.300" fill="#4080FF" stroke="#000" stroke-width="1"/><rect x="1207.5" y="577.5" width="4" height="4" rx="1.300" fill="#4080FF" stroke="#000" stroke-width="1"/><rect x="1143.5" y="601.5" width="4" height="4" rx="1.300" fill="#FF0000" stroke="#000" stroke-width="1"/><rect x="1207.5" y="601.5" width="4" height="4" rx="1.300" fill="#FF0000" stroke="#000" stroke-width="1"/><rect x="1143.5" y="609.5" width="4" height="4" rx="1.300" fill="#FF0000" stroke="#000" stroke-width="1"/><rect x="1207.5" y="609.5" width="4" height="4" rx="1.300" fill="#FF0000" stroke="#000" stroke-width="1"/><rect x="1143.5" y="617.5" width="4" height="4" rx="1.300" fill="#FF0000" stroke="#000" stroke-width="1"/><rect x="1207.5" y="617.5" width="4" height="4" rx="1.300" fill="#FF0000" stroke="#000" stroke-width="1"/><rect x="1143.5" y="625.5" width="4" height="4" rx="1.300" fill="#FF0000" stroke="#000" stroke-width="1"/><rect x="1207.5" y="625.5" width="4" height="4" rx="1.300" fill="#FF0000" stroke="#000" stroke-width="1"/><rect x="1207.5" y="641.5" width="4" height="4" rx="1.300" fill="#4080FF" stroke="#000" stroke-width="1"/><rect x="1143.5" y="553.5" width="4" height="4" rx="1.300" fill="#4080FF" stroke="#000" stroke-width="1"/><rect x="455.5" y="601.5" width="4" height="4" rx="1.300" fill="#FF0000" stroke="#000" stroke-width="1"/><rect x="455.5" y="609.5" width="4" height="4" rx="1.300" fill="#FF0000" stroke="#000" stroke-width="1"/><rect x="455.5" y="617.5" width="4" height="4" rx="1.300" fill="#FF0000" stroke="#000" stroke-width="1"/><rect x="455.5" y="625.5" width="4" height="4" rx="1.300" fill="#FFFFFF" stroke="#000" stroke-width="1"/></svg>
<svg width="1280" height="994"><path d="M628 811h5l-2.500 3zM647 811h5l-2.500 3z" fill="#000"/><path d="M635 811.500h10" stroke="#fff"/><path d="M635 812.500h10" stroke="#ACA899"/><path d="M644.500 811v2" stroke="#ACA899"/></svg>
<div class="a" style="left:0px;top:814px;width:93px;height:1px;background:#ACA899"></div>
<div class="a" style="left:0px;top:815px;width:93px;height:1px;background:#716F64"></div>
<div class="a" style="left:92px;top:815px;width:1px;height:153px;background:#fff"></div>
<div class="a" style="left:1px;top:815px;width:1px;height:153px;background:#fff"></div>
<div class="a" style="left:3px;top:816px;width:9px;height:9px;border:1px solid #fff;border-right-color:#716F64;border-bottom-color:#716F64"></div>
<svg width="1280" height="994"><path d="M5 818.500l4 4M9 818.500l-4 4" stroke="#000" stroke-width="1.200"/></svg>
<div class="a" style="left:2px;top:825px;width:10px;height:143px;background:#fff"></div>
<div class="a" style="left:6px;top:827px;width:1px;height:140px;background:#ACA899"></div>
<div class="a" style="left:9px;top:827px;width:1px;height:140px;background:#ACA899"></div>
<div class="a" style="left:12px;top:816px;width:79px;height:152px;background:#7FBA42"></div>
<div class="a" style="left:12px;top:860px;width:79px;height:63px;background:#fff"></div>
<svg width="1280" height="994"><rect x="12.750" y="860" width="37" height="26.250" fill="#fff" stroke="#FFA500" stroke-width="1.500"/><path d="M14 861.500h22" stroke="#000" stroke-width="1"/><path d="M13 865h23M13 868h6M20 868.500h16" stroke="#000" stroke-width="2"/><rect x="29" y="864" width="7" height="6" fill="#000"/><rect x="25" y="862.500" width="3" height="2" fill="#fff"/><rect x="21" y="866" width="8" height="2" fill="#fff"/><circle cx="22" cy="866.500" r="1" fill="#000"/><rect x="20" y="864.500" width="1.500" height="1.500" fill="#3070F0"/><rect x="30" y="864.500" width="1.500" height="1.500" fill="#3070F0"/><rect x="32" y="865" width="2" height="2" fill="#fff"/><rect x="16" y="868" width="3" height="9" fill="#000"/><rect x="17" y="869" width="1.300" height="3" fill="#3070F0"/><rect x="17" y="873" width="1.300" height="3" fill="#3070F0"/><path d="M19 873h8" stroke="#000" stroke-width="1.300"/><path d="M13 877h3l3 3v1.500h-6z" fill="#000"/><rect x="18.500" y="878.500" width="14" height="6" rx="1.500" fill="#fff" stroke="#000" stroke-width="1.200"/><path d="M36 880h12M36 884h12" stroke="#000" stroke-width="1.800"/><rect x="41" y="877" width="7" height="4" fill="#000"/><rect x="46" y="878" width="1.500" height="3" fill="#3070F0"/><rect x="44" y="878" width="1.200" height="1.200" fill="#fff"/></svg>
<div class="t" style="left:35px;top:885px;font-size:13px;font-weight:bold;transform:scaleX(1.023);transform-origin:0 0;line-height:13px">100%</div>
<svg width="1280" height="994"><path d="M96.500 879v5l-3-2.500zM96.500 898v5l-3-2.500z" fill="#000"/><path d="M94.500 886v10" stroke="#fff"/><path d="M95.500 886v10" stroke="#ACA899"/></svg>
<div class="a" style="left:97px;top:835px;width:764px;height:135px;border:1px solid #fff;border-right-color:#716F64;border-bottom-color:#716F64;box-shadow:inset -1px -1px 0 #ACA899"></div>
<div class="a" style="left:99px;top:816px;width:81px;height:20px;background:#ECE9D8;border-left:1px solid #fff;border-top:1px solid #fff;border-right:1px solid #716F64;border-radius:3px 3px 0 0;box-shadow:inset -1px 0 0 #ACA899"></div>
<div class="a" style="left:181px;top:816px;width:79px;height:20px;background:#ECE9D8;border-left:1px solid #fff;border-top:1px solid #fff;border-right:1px solid #716F64;border-radius:3px 3px 0 0;box-shadow:inset -1px 0 0 #ACA899"></div>
<div class="a" style="left:260px;top:816px;width:74px;height:20px;background:#ECE9D8;border-left:1px solid #fff;border-top:1px solid #fff;border-right:1px solid #716F64;border-radius:3px 3px 0 0;box-shadow:inset -1px 0 0 #ACA899"></div>
<div class="a" style="left:332px;top:814px;width:81px;height:23px;background:#ECE9D8;border-left:1px solid #fff;border-top:1px solid #fff;border-right:1px solid #716F64;border-radius:3px 3px 0 0;box-shadow:inset -1px 0 0 #ACA899"></div>
<div class="a" style="left:333px;top:834px;width:78px;height:3px;background:#ECE9D8"></div>
<div class="t" style="left:126px;top:820px;font-size:11px;transform:scaleX(1.002);transform-origin:0 0;">Informace</div>
<div class="t" style="left:209px;top:820px;font-size:11px;transform:scaleX(0.954);transform-origin:0 0;">Výsledky</div>
<div class="t" style="left:287px;top:820px;font-size:11px;transform:scaleX(0.956);transform-origin:0 0;">Kukátko</div>
<div class="t" style="left:359px;top:818px;font-size:11px;transform:scaleX(0.959);transform-origin:0 0;">Knihovna</div>
<div class="a" style="left:101px;top:838px;width:152px;height:1px;background:#ACA899"></div>
<div class="a" style="left:101px;top:838px;width:1px;height:128px;background:#ACA899"></div>
<div class="a" style="left:102px;top:839px;width:151px;height:1px;background:#716F64"></div>
<div class="a" style="left:102px;top:839px;width:1px;height:127px;background:#716F64"></div>
<div class="a" style="left:103px;top:840px;width:150px;height:1px;background:#C4C0AE"></div>
<div class="a" style="left:103px;top:840px;width:1px;height:126px;background:#C4C0AE"></div>
<div class="a" style="left:251px;top:840px;width:1px;height:126px;background:#fff"></div>
<div class="a" style="left:252px;top:838px;width:1px;height:128px;background:#fff"></div>
<div class="a" style="left:103px;top:964px;width:150px;height:1px;background:#fff"></div>
<div class="a" style="left:101px;top:965px;width:152px;height:1px;background:#fff"></div>
<div class="a" style="left:105px;top:842px;width:146px;height:1px;background:#fff"></div>
<div class="a" style="left:104px;top:842px;width:1px;height:27px;background:#fff"></div>
<div class="a" style="left:113px;top:845px;width:22px;height:21px;background:#F4F3EA;border:1px solid #ACA899;border-right-color:#fff;border-bottom-color:#fff"></div>
<div class="a" style="left:136px;top:845px;width:22px;height:21px;border:1px solid #fff;border-right-color:#ACA899;border-bottom-color:#ACA899"></div>
<div class="a" style="left:159px;top:845px;width:22px;height:21px;border:1px solid #fff;border-right-color:#ACA899;border-bottom-color:#ACA899"></div>
<div class="a" style="left:182px;top:845px;width:22px;height:21px;border:1px solid #fff;border-right-color:#ACA899;border-bottom-color:#ACA899"></div>
<div class="a" style="left:105px;top:869px;width:146px;height:93px;background:#fff;border:1px solid #000"></div>
<div class="t" style="left:126px;top:872px;font-size:11px;transform:scaleX(0.986);transform-origin:0 0;">Hardware</div>
<div class="t" style="left:126px;top:888px;font-size:11px;transform:scaleX(0.958);transform-origin:0 0;">Komunikace</div>
<div class="t" style="left:126px;top:904px;font-size:11px;transform:scaleX(1.015);transform-origin:0 0;">Ostatní</div>
<div class="t" style="left:126px;top:920px;font-size:11px;transform:scaleX(0.968);transform-origin:0 0;">Regulace</div>
<div class="t" style="left:126px;top:936px;font-size:11px;transform:scaleX(0.974);transform-origin:0 0;">SW hradla</div>
<div class="a" style="left:126px;top:952px;width:100px;height:9px;overflow:hidden"><div class="t" style="left:0;top:0;transform:scaleX(0.968);transform-origin:0 0">Systémové moduly</div></div>
<div class="a" style="left:234px;top:870px;width:16px;height:91px;background:linear-gradient(90deg,#F0EFE8,#FDFDFB 40%,#FEFEFC)"></div>
<div class="a" style="left:234px;top:871px;width:15px;height:15px;background:linear-gradient(135deg,#E0E8FC,#C0D0F8 50%,#B0C4F4);border:1px solid #fff;border-radius:2px;box-shadow:0 0 0 1px #B8C8F0 inset"></div>
<svg width="1280" height="994"><path d="M238 880l3.500-3.500 3.500 3.500" fill="none" stroke="#4D6185" stroke-width="2"/></svg>
<div class="a" style="left:234px;top:945px;width:15px;height:15px;background:linear-gradient(135deg,#E0E8FC,#C0D0F8 50%,#B0C4F4);border:1px solid #fff;border-radius:2px;box-shadow:0 0 0 1px #B8C8F0 inset"></div>
<svg width="1280" height="994"><path d="M238 951l3.500 3.500 3.500-3.500" fill="none" stroke="#4D6185" stroke-width="2"/></svg>
<div class="a" style="left:234px;top:888px;width:15px;height:47px;background:linear-gradient(90deg,#D0DCFC,#BCCCF8);border:1px solid #fff;border-radius:2px;box-shadow:0 0 0 1px #B0C0F0 inset"></div>
<div class="a" style="left:257px;top:838px;width:601px;height:1px;background:#ACA899"></div>
<div class="a" style="left:257px;top:839px;width:601px;height:1px;background:#716F64"></div>
<div class="a" style="left:257px;top:840px;width:601px;height:1px;background:#C4C0AE"></div>
<div class="a" style="left:257px;top:838px;width:1px;height:128px;background:#ACA899"></div>
<div class="a" style="left:258px;top:839px;width:1px;height:126px;background:#716F64"></div>
<div class="a" style="left:856px;top:840px;width:1px;height:126px;background:#fff"></div>
<div class="a" style="left:857px;top:838px;width:1px;height:128px;background:#fff"></div>
<div class="a" style="left:258px;top:964px;width:599px;height:1px;background:#fff"></div>
<div class="a" style="left:257px;top:965px;width:601px;height:1px;background:#fff"></div>
<div class="a" style="left:259px;top:842px;width:597px;height:1px;background:#fff"></div>
<div class="a" style="left:259px;top:842px;width:1px;height:27px;background:#fff"></div>
<div class="a" style="left:267px;top:845px;width:22px;height:21px;border:1px solid #fff;border-right-color:#ACA899;border-bottom-color:#ACA899"></div>
<div class="a" style="left:290px;top:845px;width:22px;height:21px;background:#F4F3EA;border:1px solid #ACA899;border-right-color:#fff;border-bottom-color:#fff"></div>
<div class="a" style="left:313px;top:845px;width:22px;height:21px;border:1px solid #fff;border-right-color:#ACA899;border-bottom-color:#ACA899"></div>
<div class="a" style="left:336px;top:845px;width:22px;height:21px;border:1px solid #fff;border-right-color:#ACA899;border-bottom-color:#ACA899"></div>
<div class="t" style="left:380px;top:850px;font-size:11px;transform:scaleX(0.857);transform-origin:0 0;">Najít:</div>
<div class="a" style="left:405px;top:847px;width:444px;height:18px;background:#fff;border:1px solid #000"></div>
<div class="a" style="left:259px;top:869px;width:594px;height:93px;background:#fff;border:1px solid #000"></div>
<div class="t" style="left:286px;top:871px;font-size:11px;transform:scaleX(0.931);transform-origin:0 0;color:#00E000;font-size:11px">Sysmon</div>
<div class="t" style="left:391px;top:871px;font-size:11px;transform:scaleX(0.935);transform-origin:0 0;color:#000;font-size:11px">Graf</div>
<div class="t" style="left:496px;top:871px;font-size:11px;transform:scaleX(0.898);transform-origin:0 0;color:#000;font-size:11px">ASERVO</div>
<div class="t" style="left:601px;top:871px;font-size:11px;transform:scaleX(0.876);transform-origin:0 0;color:#000;font-size:11px">BSERVO</div>
<div class="t" style="left:706px;top:871px;font-size:11px;transform:scaleX(0.982);transform-origin:0 0;color:#000;font-size:11px">Ekviterm</div>
<div class="t" style="left:286px;top:896px;font-size:11px;transform:scaleX(0.956);transform-origin:0 0;color:#000;font-size:11px">FastPID</div>
<div class="t" style="left:391px;top:896px;font-size:11px;transform:scaleX(0.967);transform-origin:0 0;color:#000;font-size:11px">Flash</div>
<div class="t" style="left:496px;top:896px;font-size:11px;transform:scaleX(0.968);transform-origin:0 0;color:#000;font-size:11px">havan</div>
<div class="t" style="left:601px;top:896px;font-size:11px;transform:scaleX(0.987);transform-origin:0 0;color:#000;font-size:11px">havbin</div>
<div class="t" style="left:706px;top:896px;font-size:11px;transform:scaleX(0.947);transform-origin:0 0;color:#000;font-size:11px">Screen</div>
<div class="t" style="left:286px;top:921px;font-size:11px;transform:scaleX(1.024);transform-origin:0 0;color:#000;font-size:11px">Timdat</div>
<div class="t" style="left:391px;top:921px;font-size:11px;transform:scaleX(1.011);transform-origin:0 0;color:#000;font-size:11px">Timer</div>
<svg width="1280" height="994"><rect x="105.500" y="818.500" width="15" height="14" fill="#fff" stroke="#1010A0" stroke-width="1.100"/><rect x="105" y="818" width="16" height="2" fill="#1010A0"/><path d="M107.500 823.500h4M107.500 825.500h4M107.500 827.500h4M107.500 829.500h4" stroke="#3040E0"/><path d="M112.500 823.500h7M112.500 825.500h7M112.500 827.500h7M112.500 829.500h7" stroke="#F03030"/><rect x="187.500" y="819.500" width="9" height="10" fill="#D0DCF4" stroke="#8098D0"/><path d="M189 822h5M189 824h3" stroke="#5070C0"/><circle cx="196" cy="827" r="3.600" fill="#D8E8F8" stroke="#90A8B0" stroke-width="1.200"/><path d="M198.500 829.500l3.500 3.500" stroke="#C09020" stroke-width="1.600"/><path d="M266.500 826.500c4-6 11-6 15 0c-4 6-11 6-15 0z" fill="#fff" stroke="#705010" stroke-width="1.300"/><circle cx="274" cy="826.500" r="3.300" fill="#1030D0"/><rect x="339.500" y="816.500" width="13" height="14" fill="#F8F0D8" stroke="#B08820" stroke-width="1.300"/><rect x="342" y="817" width="8" height="2" fill="#B08820"/><linearGradient id="tp19" x1="0" y1="0" x2="0.450" y2="1"><stop offset="0" stop-color="#fff"/><stop offset="0.5" stop-color="#E0E8FC"/><stop offset="1" stop-color="#94B0F4"/></linearGradient><rect x="342.5" y="820.5" width="8" height="8" fill="url(#tp19)" stroke="#8CA4EC"/><linearGradient id="fd1" x1="0" y1="0" x2="1" y2="1"><stop offset="0" stop-color="#FFF8B0"/><stop offset="1" stop-color="#FAD878"/></linearGradient><path d="M116.5 849.5h6.4l2 2h6.6v10h-15z" fill="url(#fd1)" stroke="#D8B860" stroke-width=".8"/><linearGradient id="fd2" x1="0" y1="0" x2="1" y2="1"><stop offset="0" stop-color="#FFF8B0"/><stop offset="1" stop-color="#FAD878"/></linearGradient><path d="M139.5 849.5h6.4l2 2h6.6v10h-15z" fill="url(#fd2)" stroke="#D8B860" stroke-width=".8"/><linearGradient id="fd3" x1="0" y1="0" x2="1" y2="1"><stop offset="0" stop-color="#FFF8B0"/><stop offset="1" stop-color="#FAD878"/></linearGradient><path d="M162.5 849.5h6.4l2 2h6.6v10h-15z" fill="url(#fd3)" stroke="#D8B860" stroke-width=".8"/><linearGradient id="fd4" x1="0" y1="0" x2="1" y2="1"><stop offset="0" stop-color="#FFF8B0"/><stop offset="1" stop-color="#FAD878"/></linearGradient><path d="M185.5 849.5h6.4l2 2h6.6v10h-15z" fill="url(#fd4)" stroke="#D8B860" stroke-width=".8"/><path d="M124 860l-4-4.500c-1.500-2.500 2.500-4.500 4-1.500c1.500-3 5.500-1 4 1.500z" fill="#F02020"/><circle cx="147" cy="856" r="3.500" fill="none" stroke="#605000" stroke-width="1.800" stroke-dasharray="2 1.200"/><path d="M147 851v5" stroke="#C0C0C0" stroke-width="1.500"/><circle cx="168" cy="854" r="3.300" fill="#60D8F0" stroke="#2080A0"/><path d="M170.500 857l4 4.500" stroke="#2040C0" stroke-width="2"/><path d="M193 853v5M190.500 855.500h5M191.500 854l3 3M194.500 854l-3 3" stroke="#3060E0" stroke-width=".9"/><linearGradient id="fd5" x1="0" y1="0" x2="1" y2="1"><stop offset="0" stop-color="#FFF8B0"/><stop offset="1" stop-color="#FAD878"/></linearGradient><path d="M106.5 871.5h6l2 2h6v10h-14z" fill="url(#fd5)" stroke="#D8B860" stroke-width=".8"/><linearGradient id="fd6" x1="0" y1="0" x2="1" y2="1"><stop offset="0" stop-color="#FFF8B0"/><stop offset="1" stop-color="#FAD878"/></linearGradient><path d="M106.5 887.5h6l2 2h6v10h-14z" fill="url(#fd6)" stroke="#D8B860" stroke-width=".8"/><linearGradient id="fd7" x1="0" y1="0" x2="1" y2="1"><stop offset="0" stop-color="#FFF8B0"/><stop offset="1" stop-color="#FAD878"/></linearGradient><path d="M106.5 903.5h6l2 2h6v10h-14z" fill="url(#fd7)" stroke="#D8B860" stroke-width=".8"/><linearGradient id="fd8" x1="0" y1="0" x2="1" y2="1"><stop offset="0" stop-color="#FFF8B0"/><stop offset="1" stop-color="#FAD878"/></linearGradient><path d="M106.5 919.5h6l2 2h6v10h-14z" fill="url(#fd8)" stroke="#D8B860" stroke-width=".8"/><linearGradient id="fd9" x1="0" y1="0" x2="1" y2="1"><stop offset="0" stop-color="#FFF8B0"/><stop offset="1" stop-color="#FAD878"/></linearGradient><path d="M106.5 935.5h6l2 2h6v10h-14z" fill="url(#fd9)" stroke="#D8B860" stroke-width=".8"/><clipPath id="clf"><rect x="106" y="870" width="128" height="91"/></clipPath><g clip-path="url(#clf)"><linearGradient id="fd10" x1="0" y1="0" x2="1" y2="1"><stop offset="0" stop-color="#FFF8B0"/><stop offset="1" stop-color="#FAD878"/></linearGradient><path d="M106.5 951.5h6l2 2h6v10h-14z" fill="url(#fd10)" stroke="#D8B860" stroke-width=".8"/></g><path d="M238 907.500h7M238 909.500h7M238 911.500h7M238 913.500h7" stroke="#EEF4FE"/><path d="M239 908.500h7M239 910.500h7M239 912.500h7M239 914.500h7" stroke="#8CB0F8"/><path d="M256.500 889v5l-3-2.500zM256.500 908v5l-3-2.500z" fill="#000"/><path d="M254.500 896v10" stroke="#fff"/><path d="M255.500 896v10" stroke="#ACA899"/><linearGradient id="tp20" x1="0" y1="0" x2="0.450" y2="1"><stop offset="0" stop-color="#fff"/><stop offset="0.5" stop-color="#E0E8FC"/><stop offset="1" stop-color="#94B0F4"/></linearGradient><rect x="272.5" y="848.5" width="11" height="10" fill="url(#tp20)" stroke="#8CA4EC"/><path d="M271 861.500h4M276 861.500h4M281 861.500h4" stroke="#000" stroke-width="1.400"/><rect x="294.5" y="849.5" width="5" height="5" fill="#E4ECFC" stroke="#8CA4EC"/><rect x="302.5" y="849.5" width="5" height="5" fill="#E4ECFC" stroke="#8CA4EC"/><rect x="294.5" y="857.5" width="5" height="5" fill="#E4ECFC" stroke="#8CA4EC"/><rect x="302.5" y="857.5" width="5" height="5" fill="#E4ECFC" stroke="#8CA4EC"/><rect x="321.5" y="849.5" width="5" height="5" fill="#E4ECFC" stroke="#8CA4EC"/><rect x="321.5" y="857.5" width="5" height="5" fill="#E4ECFC" stroke="#8CA4EC"/><rect x="341.5" y="849.5" width="5" height="5" fill="#E4ECFC" stroke="#8CA4EC"/><rect x="341.5" y="857.5" width="5" height="5" fill="#E4ECFC" stroke="#8CA4EC"/><path d="M349 851.500h5M349 859.500h5" stroke="#808080" stroke-width="1.400"/><g transform="translate(260,870)"><rect width="24" height="24" fill="#000"/><rect width="24" height="3" fill="#20D0D0"/><rect y="4" width="24" height="6" fill="#D8D8E8"/><path d="M2 13.500h4M8 13.500h3M2 16.500h5M2 19.500h6M2 21.500h8M10 16.500h6" stroke="#fff"/><path d="M3 7h3M16 7h4" stroke="#2020C0" stroke-width="2"/></g><g transform="translate(365,870)"><path d="M2.500 1v22M0 11.500h22" stroke="#000"/><path d="M3 9C5 2 9 2 14 6S20 10 22 13" fill="none" stroke="#F02020" stroke-width="1.200"/><path d="M3 12C5 18 10 18 15 12S19 6 21 3" fill="none" stroke="#2020F0" stroke-width="1.200"/></g><g transform="translate(470,870)"><rect width="24" height="24" fill="#FFC8C8"/><rect x="4.500" y="3.500" width="15" height="7" rx="2" fill="#60C8F0" stroke="#000"/><circle cx="17" cy="7" r="2.500" fill="#E0E0E0" stroke="#606060" stroke-width=".6"/><path d="M6.500 14v8h9" fill="none" stroke="#000"/><path d="M6.500 22l8-7" stroke="#F02020"/></g><g transform="translate(575,870)"><rect width="24" height="24" fill="#FFC8C8"/><rect x="4.500" y="3.500" width="15" height="7" rx="2" fill="#C8F020" stroke="#000"/><circle cx="17" cy="7" r="2.500" fill="#E0E0E0" stroke="#606060" stroke-width=".6"/><path d="M2 19.500h20" stroke="#2020C0"/><path d="M7 15v8M13 16v6M19 16v6" stroke="#208020" stroke-width="1.500"/><rect x="9" y="20" width="3" height="3" fill="#F02020"/><rect x="20" y="20" width="3" height="3" fill="#2020F0"/><path d="M2 16.500h3M3.500 15v3" stroke="#10A010"/><path d="M2 21.500h3" stroke="#F02020"/></g><g transform="translate(680,870)"><rect width="24" height="24" fill="#FFC8C8"/><rect x="2" y="4" width="14" height="9" fill="#E0E0E0" stroke="#808080" stroke-width=".6"/><path d="M5.500 4v9M9 4v9M12.500 4v9M2 7h14M2 10h14" stroke="#808080" stroke-width=".6"/><path d="M2 4.500l13 7" stroke="#F02020"/><text x="1" y="22.500" font-size="5.500" font-family="Liberation Sans" font-weight="bold" fill="#806080" textLength="22" lengthAdjust="spacingAndGlyphs">EKVITERM</text><text x="16" y="14" font-size="4.500" font-family="Liberation Sans" font-weight="bold" fill="#2020C0">Tek</text><text x="1" y="4" font-size="4.500" font-family="Liberation Sans" font-weight="bold" fill="#2020C0">OT</text></g><g transform="translate(260,895)"><rect width="24" height="24" fill="#FFC8C8"/><text x="5" y="8.500" font-size="8.500" font-family="Liberation Sans" font-weight="bold" textLength="14" lengthAdjust="spacingAndGlyphs">PID</text><rect x="3" y="11" width="19" height="11" fill="#FFF0D8"/><path d="M3.500 11v11.500h19" fill="none" stroke="#806040"/><path d="M4 21c1-9 3-9 6-5s6 0 11-4" fill="none" stroke="#F04040"/></g><g transform="translate(365,895)"><rect width="24" height="24" fill="#FFC000"/><rect x="1.500" y="7.500" width="21" height="11" rx="2" fill="#303018" stroke="#000"/><text x="3.500" y="16" font-size="7.500" font-family="Liberation Sans" font-weight="bold" fill="#FFE000" textLength="17" lengthAdjust="spacingAndGlyphs">FLASH</text></g><g transform="translate(470,895)"><rect width="24" height="24" fill="#FFC8C8"/><g transform="rotate(38 12 12)"><path d="M12.500 3.500c-1 0-1.500.5-1.500 1.500c-2.500 1-3.500 3.500-3.500 7.500l-1.500 2h13l-1.500-2c0-4-1-6.500-3.500-7.500c0-1-.5-1.500-1.500-1.500z" fill="#E8D820" stroke="#807000" stroke-width=".8"/><circle cx="12.500" cy="15.500" r="1.500" fill="#E8D820" stroke="#807000" stroke-width=".6"/><path d="M9 7.500c-.8 1.500-1 3-1 5" fill="none" stroke="#fff" stroke-width=".9" opacity=".8"/></g><path d="M4 13l3 2.500M5.500 16l3 2.500M8 18.500l3 2.500" stroke="#505050" stroke-width="1.300" stroke-dasharray="1.500 .8"/></g><g transform="translate(575,895)"><rect width="24" height="24" fill="#FFC8C8"/><g transform="rotate(38 12 12)"><path d="M12.500 3.500c-1 0-1.500.5-1.500 1.500c-2.500 1-3.500 3.500-3.500 7.500l-1.500 2h13l-1.500-2c0-4-1-6.500-3.500-7.500c0-1-.5-1.500-1.500-1.500z" fill="#F02020" stroke="#800000" stroke-width=".8"/><circle cx="12.500" cy="15.500" r="1.500" fill="#F02020" stroke="#800000" stroke-width=".6"/><path d="M9 7.500c-.8 1.500-1 3-1 5" fill="none" stroke="#fff" stroke-width=".9" opacity=".8"/></g><path d="M4 13l3 2.500M5.500 16l3 2.500M8 18.500l3 2.500" stroke="#505050" stroke-width="1.300" stroke-dasharray="1.500 .8"/></g><g transform="translate(680,895)"><rect width="24" height="24" fill="#00FFFF"/><text x=".5" y="6.500" font-size="7" font-family="Liberation Sans" font-weight="bold" fill="#003060" textLength="23" lengthAdjust="spacingAndGlyphs">SCREEN</text><rect x="1.500" y="9.500" width="21" height="13" fill="#00E800" stroke="#003000"/><text x="3" y="14.500" font-size="4.500" font-family="Liberation Sans" fill="#003000">Menu:</text></g><g transform="translate(260,920)"><rect width="24" height="24" fill="#F8F4D8"/><rect y="20" width="24" height="4" fill="#FFC000"/><text x="1.500" y="9" font-size="8.500" font-family="Liberation Sans" font-weight="bold" fill="#1010F0" textLength="9" lengthAdjust="spacingAndGlyphs">12</text><text x="14" y="9" font-size="8.500" font-family="Liberation Sans" font-weight="bold" fill="#1010F0" textLength="9" lengthAdjust="spacingAndGlyphs">13</text><circle cx="12" cy="16" r="6.500" fill="#D0F0E0" stroke="#C01010" stroke-width="1.500"/><path d="M12 16v-4M12 16h4" stroke="#1010A0"/></g><g transform="translate(365,920)"><rect width="24" height="24" fill="#FFC8C8"/><rect x="3.500" y="2.500" width="17" height="18" rx="1" fill="#20D020" stroke="#002000" stroke-width="1.500"/><rect x="7.500" y="4.500" width="9" height="11" rx="2" fill="#C0D890" stroke="#303000"/><path d="M11.500 12v-5h2" fill="none" stroke="#303000"/><path d="M6 18.500h12" stroke="#90E090" stroke-width="2"/></g><path d="M862.500 880v5l3-2.500zM862.500 900v5l3-2.500z" fill="#000"/><path d="M863.500 887v11" stroke="#fff"/><path d="M864.500 887v11" stroke="#ACA899"/></svg>
<div class="a" style="left:865px;top:814px;width:413px;height:1px;background:#ACA899"></div>
<div class="a" style="left:865px;top:815px;width:413px;height:1px;background:#716F64"></div>
<div class="a" style="left:865px;top:815px;width:1px;height:153px;background:#716F64"></div>
<div class="a" style="left:866px;top:816px;width:1px;height:151px;background:#fff"></div>
<div class="a" style="left:866px;top:816px;width:12px;height:1px;background:#fff"></div>
<div class="a" style="left:866px;top:967px;width:412px;height:1px;background:#716F64"></div>
<div class="a" style="left:867px;top:966px;width:410px;height:1px;background:#ACA899"></div>
<div class="a" style="left:1277px;top:837px;width:1px;height:130px;background:#716F64"></div>
<div class="a" style="left:1276px;top:838px;width:1px;height:128px;background:#ACA899"></div>
<div class="a" style="left:867px;top:817px;width:9px;height:9px;border:1px solid #fff;border-right-color:#716F64;border-bottom-color:#716F64"></div>
<svg width="1280" height="994"><path d="M869.500 819l4 4M873.500 819l-4 4" stroke="#000" stroke-width="1.200"/></svg>
<div class="a" style="left:867px;top:826px;width:11px;height:140px;background:#fff"></div>
<div class="a" style="left:871px;top:827px;width:1px;height:139px;background:#ACA899"></div>
<div class="a" style="left:874px;top:827px;width:1px;height:139px;background:#ACA899"></div>
<div class="a" style="left:942px;top:819px;width:67px;height:19px;background:#ECE9D8;border-left:1px solid #fff;border-top:1px solid #fff;border-right:1px solid #716F64;border-radius:3px 3px 0 0;box-shadow:inset -1px 0 0 #ACA899"></div>
<div class="a" style="left:1010px;top:819px;width:51px;height:19px;background:#ECE9D8;border-left:1px solid #fff;border-top:1px solid #fff;border-right:1px solid #716F64;border-radius:3px 3px 0 0;box-shadow:inset -1px 0 0 #ACA899"></div>
<div class="a" style="left:877px;top:816px;width:64px;height:22px;background:#ECE9D8;border-left:1px solid #fff;border-top:1px solid #fff;border-right:1px solid #716F64;border-radius:3px 3px 0 0;box-shadow:inset -1px 0 0 #ACA899"></div>
<div class="t" style="left:885px;top:820px;font-size:11px;transform:scaleX(0.971);transform-origin:0 0;">Informace</div>
<div class="t" style="left:944.5px;top:822px;font-size:11px;transform:scaleX(0.950);transform-origin:0 0;">Komunikace</div>
<div class="t" style="left:1015px;top:822px;font-size:11px;transform:scaleX(0.952);transform-origin:0 0;">Nástroje</div>
<div class="a" style="left:881px;top:839px;width:393px;height:90px;background:#fff;border:1px solid #000;border-top:2px solid #000"></div>
<div class="a" style="left:881px;top:839px;width:393px;height:1px;background:#55534A"></div>
<div class="t" style="left:903.5px;top:846px;font-size:11px;transform:scaleX(0.966);transform-origin:0 0;">06:38:29 - Spuštěn RUN režim ...</div>
<div class="t" style="left:903.5px;top:863px;font-size:11px;transform:scaleX(0.955);transform-origin:0 0;">06:39:16 - Ukončuji RUN režim ...</div>
<div class="t" style="left:903.5px;top:880px;font-size:11px;transform:scaleX(0.965);transform-origin:0 0;">06:39:16 - RUN režim ukončen ...</div>
<svg width="1280" height="994"><path d="M890.5 855l5.500 4.500 1-5.500" fill="#fff" stroke="#303030" stroke-width="1.100"/><ellipse cx="893.600" cy="850.2" rx="7.200" ry="6" fill="#fff" stroke="#303030" stroke-width="1.200"/><rect x="892.400" y="852" width="4.200" height="4.500" fill="#fff"/><path d="M891.500 849.5h3v4.500M891 854.4h5.500" fill="none" stroke="#1010E0" stroke-width="1.700"/><rect x="892.300" y="846" width="2.400" height="2" fill="#1010E0"/><path d="M890.5 872l5.500 4.500 1-5.500" fill="#fff" stroke="#303030" stroke-width="1.100"/><ellipse cx="893.600" cy="867.2" rx="7.200" ry="6" fill="#fff" stroke="#303030" stroke-width="1.200"/><rect x="892.400" y="869" width="4.200" height="4.500" fill="#fff"/><path d="M891.500 866.5h3v4.500M891 871.4h5.500" fill="none" stroke="#1010E0" stroke-width="1.700"/><rect x="892.300" y="863" width="2.400" height="2" fill="#1010E0"/><path d="M890.5 889l5.500 4.500 1-5.500" fill="#fff" stroke="#303030" stroke-width="1.100"/><ellipse cx="893.600" cy="884.2" rx="7.200" ry="6" fill="#fff" stroke="#303030" stroke-width="1.200"/><rect x="892.400" y="886" width="4.200" height="4.500" fill="#fff"/><path d="M891.500 883.5h3v4.500M891 888.4h5.500" fill="none" stroke="#1010E0" stroke-width="1.700"/><rect x="892.300" y="880" width="2.400" height="2" fill="#1010E0"/></svg>
<div class="a" style="left:1255px;top:841px;width:18px;height:69px;background:linear-gradient(90deg,#F0EFE8,#FDFDFB 40%,#FEFEFC)"></div>
<div class="a" style="left:1255px;top:910px;width:18px;height:18px;background:#ECE9D8"></div>
<div class="a" style="left:1255px;top:842px;width:16px;height:16px;background:linear-gradient(135deg,#E0E8FC,#C0D0F8 50%,#B0C4F4);border:1px solid #fff;border-radius:2px;box-shadow:0 0 0 1px #B8C8F0 inset"></div>
<svg width="1280" height="994"><path d="M1259.5 851.5l3.500-3.500 3.500 3.500" fill="none" stroke="#4D6185" stroke-width="2"/></svg>
<div class="a" style="left:1255px;top:892px;width:16px;height:16px;background:linear-gradient(135deg,#E0E8FC,#C0D0F8 50%,#B0C4F4);border:1px solid #fff;border-radius:2px;box-shadow:0 0 0 1px #B8C8F0 inset"></div>
<svg width="1280" height="994"><path d="M1259.5 898.5l3.500 3.500 3.500-3.500" fill="none" stroke="#4D6185" stroke-width="2"/></svg>
<div class="a" style="left:1255px;top:884px;width:16px;height:8px;background:#C0D0F8;border:1px solid #fff;border-radius:2px;box-shadow:0 0 0 1px #B0C0F0 inset"></div>
<div class="a" style="left:882px;top:910px;width:373px;height:18px;background:linear-gradient(#F0EFE8,#FDFDFB 40%,#FEFEFC)"></div>
<div class="a" style="left:884px;top:910px;width:16px;height:16px;background:linear-gradient(135deg,#E0E8FC,#C0D0F8 50%,#B0C4F4);border:1px solid #fff;border-radius:2px;box-shadow:0 0 0 1px #B8C8F0 inset"></div>
<svg width="1280" height="994"><path d="M893.5 914.5l-3.500 3.500 3.500 3.500" fill="none" stroke="#4D6185" stroke-width="2"/></svg>
<div class="a" style="left:1237px;top:910px;width:16px;height:16px;background:linear-gradient(135deg,#E0E8FC,#C0D0F8 50%,#B0C4F4);border:1px solid #fff;border-radius:2px;box-shadow:0 0 0 1px #B8C8F0 inset"></div>
<svg width="1280" height="994"><path d="M1243.5 914.5l3.500 3.500-3.500 3.500" fill="none" stroke="#4D6185" stroke-width="2"/></svg>
<div class="a" style="left:901px;top:910px;width:325px;height:16px;background:linear-gradient(#D4E0FC,#BCCCF8);border:1px solid #fff;border-radius:2px;box-shadow:0 0 0 1px #B0C0F0 inset"></div>
<svg width="1280" height="994"><path d="M1060.500 915v6M1062.500 915v6M1064.500 915v6M1066.500 915v6" stroke="#EEF4FE"/><path d="M1061.500 916v6M1063.500 916v6M1065.500 916v6M1067.500 916v6" stroke="#8CB0F8"/></svg>
<div class="a" style="left:884px;top:934px;width:10px;height:9px;background:linear-gradient(#D0D0D0,#A4A4A4)"></div>
<div class="a" style="left:884px;top:949px;width:10px;height:9px;background:linear-gradient(#D0D0D0,#A4A4A4)"></div>
<div class="t" style="left:903.5px;top:933px;font-size:11px;transform:scaleX(0.886);transform-origin:0 0;">Čtení:</div>
<div class="t" style="left:901px;top:948px;font-size:11px;transform:scaleX(0.951);transform-origin:0 0;">Zápis:</div>
<div class="t" style="left:953.5px;top:933px;font-size:11px;transform:scaleX(0.981);transform-origin:0 0;color:#0000FF">0</div>
<div class="t" style="left:980.5px;top:933px;font-size:11px;transform:scaleX(0.981);transform-origin:0 0;color:#00C000">50</div>
<div class="t" style="left:1013.5px;top:933px;font-size:11px;transform:scaleX(0.981);transform-origin:0 0;color:#FF0000">0</div>
<div class="t" style="left:1037.5px;top:933px;font-size:11px;transform:scaleX(0.981);transform-origin:0 0;color:#000">222</div>
<div class="t" style="left:953.5px;top:948px;font-size:11px;transform:scaleX(0.981);transform-origin:0 0;color:#0000FF">0</div>
<div class="t" style="left:983.5px;top:948px;font-size:11px;transform:scaleX(0.981);transform-origin:0 0;color:#00C000">0</div>
<div class="t" style="left:1013.5px;top:948px;font-size:11px;transform:scaleX(0.981);transform-origin:0 0;color:#FF0000">0</div>
<div class="t" style="left:1043.5px;top:948px;font-size:11px;transform:scaleX(0.981);transform-origin:0 0;color:#000">0</div>
<div class="a" style="left:0px;top:970px;width:1280px;height:1px;background:#fff"></div>
<div class="a" style="left:0px;top:972px;width:70px;height:18px;border-top:1px solid #ACA899;border-left:1px solid #ACA899;border-right:1px solid #fff"></div>
<div class="a" style="left:72px;top:972px;width:138px;height:18px;border-top:1px solid #ACA899;border-left:1px solid #ACA899;border-right:1px solid #fff"></div>
<div class="a" style="left:212px;top:972px;width:138px;height:18px;border-top:1px solid #ACA899;border-left:1px solid #ACA899;border-right:1px solid #fff"></div>
<div class="a" style="left:352px;top:972px;width:928px;height:18px;border-top:1px solid #ACA899;border-left:1px solid #ACA899;border-right:1px solid #fff"></div>
<div class="t" style="left:1px;top:975px;font-size:11px;transform:scaleX(0.977);transform-origin:0 0;">PL2 [3.025]</div>
<div class="t" style="left:213px;top:975px;font-size:11px;transform:scaleX(0.973);transform-origin:0 0;">Počet vybraných: 0</div>
<div class="a" style="left:0px;top:990px;width:1280px;height:4px;background:linear-gradient(#3C88F0,#2468DC)"></div>
</body></html>
